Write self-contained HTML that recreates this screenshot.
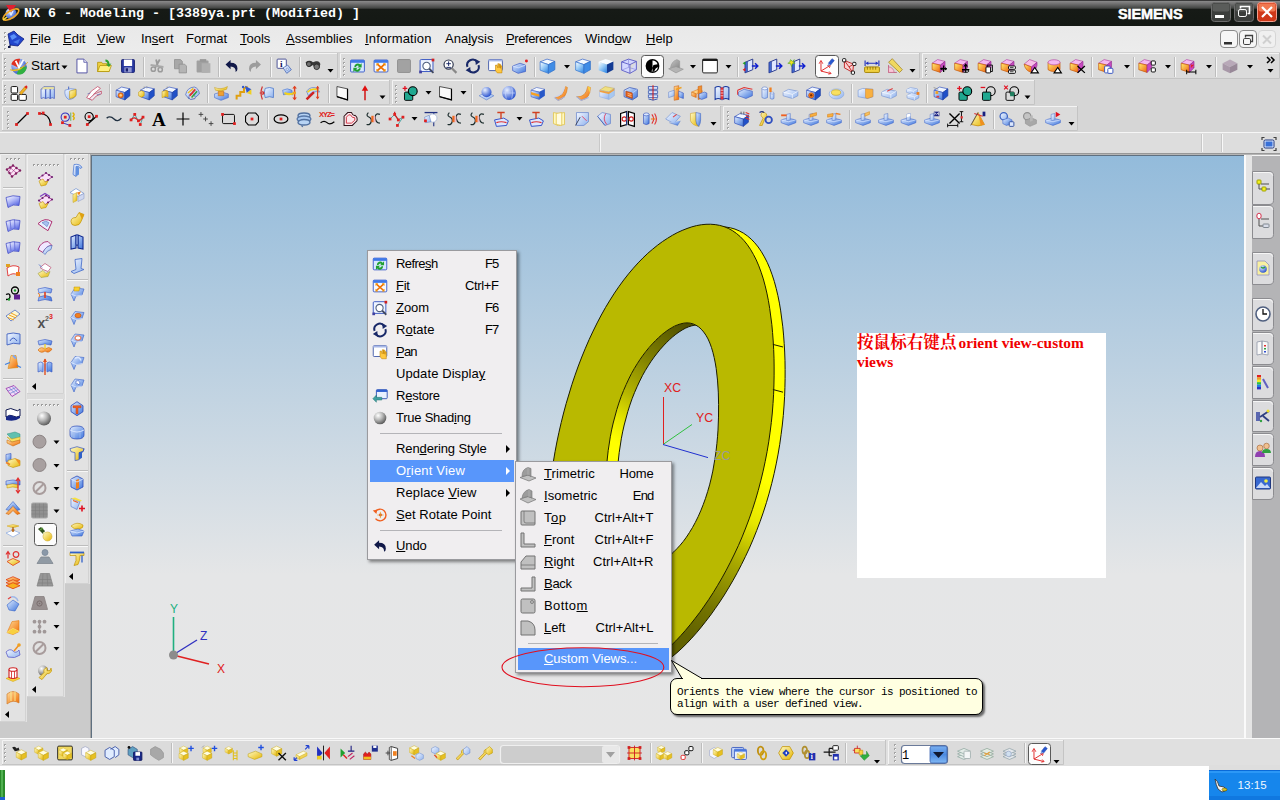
<!DOCTYPE html>
<html lang="en"><head><meta charset="utf-8"><title>NX 6 - Modeling</title>
<style>
html,body{margin:0;padding:0;}
body{width:1280px;height:800px;overflow:hidden;position:relative;background:#fff;font-family:"Liberation Sans","Noto Sans CJK SC",sans-serif;font-size:13px;color:#000;}
.abs{position:absolute;}
#title{left:0;top:0;width:1280px;height:26px;background:linear-gradient(#3a3a3a 0,#3a3a3a 1px,#8a8a8a 1px,#6e6e6e 4px,#444644 8px,#161a16 9.5px,#141814 100%);}
#title .t{left:24px;top:6px;font:bold 13.33px/16px "Liberation Mono",monospace;color:#fff;white-space:pre;}
#siemens{left:1118px;top:5px;font:bold 14.5px/18px "Liberation Sans",sans-serif;color:#fff;letter-spacing:-0.1px;-webkit-text-stroke:0.5px #fff;}
#menubar{left:0;top:26px;width:1280px;height:26px;background:linear-gradient(#e9e9e9,#ececec);border-bottom:1px solid #d0d0d0;}
#menubar span{position:absolute;top:5px;font-size:13px;line-height:16px;white-space:nowrap;}
u{text-decoration:underline;text-underline-offset:1px;}
#tbarea{left:0;top:53px;width:1280px;height:80px;background:#d6d6d6;}
#cue{left:0;top:132px;width:1280px;height:22px;background:#dddddd;border-top:1px solid #f6f6f6;border-bottom:1px solid #989898;box-sizing:border-box;}
#leftdock{left:0;top:154px;width:91px;height:584px;background:#cbcbcb;border-right:1px solid #a4a4a4;border-top:1px solid #b5b5b5;box-sizing:border-box;}
#gfx{left:91px;top:155px;width:1153px;height:583px;box-sizing:border-box;border-left:1px solid #5f7080;border-top:1px solid #5f7080;background:linear-gradient(#93bbdb 0,#e5e6e7 72%,#e6e6e6 100%);}
#rightbar{left:1244px;top:154px;width:36px;height:584px;background:#b4b4b6;border-top:1px solid #b5b5b5;box-sizing:border-box;}
#bottombar{left:0;top:738px;width:1280px;height:28px;background:#e0e0e0;border-top:1px solid #fafafa;box-sizing:border-box;}
#below{left:0;top:766px;width:1280px;height:34px;background:#fff;}
.menu{background:#f0eef0;border:1px solid #9a9a9e;box-shadow:2px 2px 3px rgba(0,0,0,.45);box-sizing:border-box;}
.mi{position:absolute;left:2px;right:2px;height:22px;line-height:22px;font-size:13px;white-space:nowrap;}
.mi .l{position:absolute;left:26px;top:0;letter-spacing:0.12px;}
.mi .r{position:absolute;right:15.5px;top:0;letter-spacing:0.12px;}
.mi.hl{background:#5896fb;color:#fff;}
.msep{position:absolute;height:1px;background:#b4b4b8;}
.arr{position:absolute;width:0;height:0;border-left:4px solid #000;border-top:4px solid transparent;border-bottom:4px solid transparent;}
#note{left:857px;top:333px;width:249px;height:245px;background:#fff;color:#f00000;font:bold 16px/19px "Liberation Serif","Noto Serif CJK SC",serif;}
#tip{left:670px;top:678px;width:313px;height:37px;box-sizing:border-box;background:#ffffe1;border:1px solid #000;border-radius:7px;box-shadow:2px 2px 2px rgba(0,0,0,.55);}
#tip div{position:absolute;left:6px;font:11px/12px "Liberation Mono",monospace;letter-spacing:-0.6px;white-space:pre;color:#000;}
#gtop{left:0;top:154px;width:1280px;height:1px;background:#b5b5b5;}

</style></head><body>
<div id="title" class="abs"><div class="abs t">NX 6 - Modeling - [3389ya.prt (Modified) ]</div><div id="siemens" class="abs">SIEMENS</div></div>
<div id="menubar" class="abs">
<span style="left:30px"><u>F</u>ile</span><span style="left:63px"><u>E</u>dit</span><span style="left:97px"><u>V</u>iew</span><span style="left:141px">In<u>s</u>ert</span><span style="left:186px">Fo<u>r</u>mat</span><span style="left:240px"><u>T</u>ools</span><span style="left:286px"><u>A</u>ssemblies</span><span style="left:365px;letter-spacing:0.14px"><u>I</u>nformation</span><span style="left:445px">Ana<u>l</u>ysis</span><span style="left:506px;letter-spacing:-0.42px"><u>P</u>references</span><span style="left:585px">Wind<u>o</u>w</span><span style="left:646px"><u>H</u>elp</span>
</div>
<div id="tbarea" class="abs"></div>
<div id="cue" class="abs"></div>
<div id="gtop" class="abs"></div>
<div id="leftdock" class="abs"></div>
<div id="gfx" class="abs"></div>
<div id="rightbar" class="abs"></div>
<div id="bottombar" class="abs"></div>
<div id="below" class="abs"></div>
<svg class="abs" style="left:0;top:0" width="1280" height="800" viewBox="0 0 1280 800"><defs>
<linearGradient id="gB" x1="0" y1="0" x2="1" y2="1"><stop offset="0" stop-color="#e4efff"/><stop offset="1" stop-color="#3d74dc"/></linearGradient>
<linearGradient id="gLB" x1="0" y1="0" x2="1" y2="1"><stop offset="0" stop-color="#f4f8ff"/><stop offset="1" stop-color="#8fb2ee"/></linearGradient>
<linearGradient id="gY" x1="0" y1="0" x2="1" y2="1"><stop offset="0" stop-color="#fffcc8"/><stop offset="1" stop-color="#e6b400"/></linearGradient>
<linearGradient id="gO" x1="0" y1="0" x2="1" y2="1"><stop offset="0" stop-color="#ffe0a0"/><stop offset="1" stop-color="#f06a00"/></linearGradient>
<linearGradient id="gOY" x1="0" y1="0" x2="1" y2="1"><stop offset="0" stop-color="#fff070"/><stop offset="1" stop-color="#f06010"/></linearGradient>
<linearGradient id="gG" x1="0" y1="0" x2="1" y2="1"><stop offset="0" stop-color="#c4c4c4"/><stop offset="1" stop-color="#8a8a8a"/></linearGradient>
<linearGradient id="gP" x1="0" y1="0" x2="1" y2="1"><stop offset="0" stop-color="#ffe6fa"/><stop offset="1" stop-color="#c060c8"/></linearGradient>
<linearGradient id="gBv" x1="0" y1="0" x2="0" y2="1"><stop offset="0" stop-color="#cfe0ff"/><stop offset="1" stop-color="#3868d0"/></linearGradient>
<linearGradient id="gBv2" x1="0" y1="0" x2="0" y2="1"><stop offset="0" stop-color="#7ab0f0"/><stop offset="0.5" stop-color="#4c8ae0"/><stop offset="1" stop-color="#80b8f4"/></linearGradient>
<linearGradient id="gBP" x1="0" y1="0" x2="0.6" y2="1"><stop offset="0" stop-color="#ffffff"/><stop offset="0.5" stop-color="#b0b8f8"/><stop offset="1" stop-color="#5060e0"/></linearGradient>
<linearGradient id="gBc" x1="0" y1="0" x2="0.7" y2="1"><stop offset="0" stop-color="#ffffff"/><stop offset="0.45" stop-color="#a8d4f8"/><stop offset="1" stop-color="#3c90e8"/></linearGradient>
<radialGradient id="gS" cx="0.35" cy="0.3" r="0.7"><stop offset="0" stop-color="#ffffff"/><stop offset="0.5" stop-color="#b8b8b8"/><stop offset="1" stop-color="#606060"/></radialGradient>
<radialGradient id="gBS" cx="0.35" cy="0.3" r="0.7"><stop offset="0" stop-color="#e8f0ff"/><stop offset="1" stop-color="#3058d0"/></radialGradient>
</defs><rect x="2" y="53" width="336" height="26" fill="#dbdbdb"/><path d="M2.5 79V53.5H338" stroke="#f4f4f4" fill="none"/><path d="M2 78.5H337.5V53" stroke="#c4c4c4" fill="none"/><rect x="340" y="53" width="580" height="26" fill="#dbdbdb"/><path d="M340.5 79V53.5H920" stroke="#f4f4f4" fill="none"/><path d="M340 78.5H919.5V53" stroke="#c4c4c4" fill="none"/><rect x="922" y="53" width="358" height="26" fill="#dbdbdb"/><path d="M922.5 79V53.5H1280" stroke="#f4f4f4" fill="none"/><path d="M922 78.5H1279.5V53" stroke="#c4c4c4" fill="none"/><rect x="4" y="58" width="2" height="2" fill="#a4a4a4"/><rect x="5" y="59" width="1" height="1" fill="#fff"/><rect x="4" y="62" width="2" height="2" fill="#a4a4a4"/><rect x="5" y="63" width="1" height="1" fill="#fff"/><rect x="4" y="66" width="2" height="2" fill="#a4a4a4"/><rect x="5" y="67" width="1" height="1" fill="#fff"/><rect x="4" y="70" width="2" height="2" fill="#a4a4a4"/><rect x="5" y="71" width="1" height="1" fill="#fff"/><rect x="4" y="74" width="2" height="2" fill="#a4a4a4"/><rect x="5" y="75" width="1" height="1" fill="#fff"/><rect x="343" y="58" width="2" height="2" fill="#a4a4a4"/><rect x="344" y="59" width="1" height="1" fill="#fff"/><rect x="343" y="62" width="2" height="2" fill="#a4a4a4"/><rect x="344" y="63" width="1" height="1" fill="#fff"/><rect x="343" y="66" width="2" height="2" fill="#a4a4a4"/><rect x="344" y="67" width="1" height="1" fill="#fff"/><rect x="343" y="70" width="2" height="2" fill="#a4a4a4"/><rect x="344" y="71" width="1" height="1" fill="#fff"/><rect x="343" y="74" width="2" height="2" fill="#a4a4a4"/><rect x="344" y="75" width="1" height="1" fill="#fff"/><rect x="925" y="58" width="2" height="2" fill="#a4a4a4"/><rect x="926" y="59" width="1" height="1" fill="#fff"/><rect x="925" y="62" width="2" height="2" fill="#a4a4a4"/><rect x="926" y="63" width="1" height="1" fill="#fff"/><rect x="925" y="66" width="2" height="2" fill="#a4a4a4"/><rect x="926" y="67" width="1" height="1" fill="#fff"/><rect x="925" y="70" width="2" height="2" fill="#a4a4a4"/><rect x="926" y="71" width="1" height="1" fill="#fff"/><rect x="925" y="74" width="2" height="2" fill="#a4a4a4"/><rect x="926" y="75" width="1" height="1" fill="#fff"/><g transform="translate(19 66.5) scale(0.92)"><g transform="scale(1.2)"><circle cx="0" cy="0" r="7" fill="url(#gBS)"/><path d="M-7 -2A7 7 0 0 1 1 -7L-1 1Z" fill="#e03020"/><path d="M-2 7A7 7 0 0 0 7 0L0 1Z" fill="#30b040"/><path d="M-8 3Q0 7 8 -4Q2 4 -8 3Z" fill="#ffd020" stroke="#e0a000" stroke-width="0.4"/><path d="M-3 -5L0 1L4 -6" fill="none" stroke="#fff" stroke-width="1.6"/></g></g><text x="31" y="70" font-family="Liberation Sans,sans-serif" font-size="13.5" fill="#000">Start</text><path d="M61.5 65.5h6l-3 3.5z" fill="#000"/><g transform="translate(82 66) scale(0.92)"><path d="M-5.5 -7.5H2L5.5 -4V7.5H-5.5Z" fill="#fff" stroke="#4a4aa0" stroke-width="1"/><path d="M2 -7.5V-4H5.5" fill="#e8e8f8" stroke="#4a4aa0" stroke-width="0.8"/></g><g transform="translate(104.5 66) scale(0.92)"><path d="M-7.5 -4H-3L-2 -2.5H5V6H-7.5Z" fill="#f0d040" stroke="#b09000" stroke-width="0.8"/><path d="M-7.5 6L-5 -0.5H7.5L5 6Z" fill="#fff080" stroke="#b09000" stroke-width="0.8"/><path d="M1 -7Q5 -7 5.5 -2L7.5 -3L5 1L1.5 -1.5L3.5 -2Q3 -5 1 -5Z" fill="#30a030"/></g><g transform="translate(128 66) scale(0.92)"><rect x="-7" y="-7" width="14" height="14" fill="#2838a0" stroke="#182070" stroke-width="1" rx="1"/><rect x="-4.5" y="-7" width="9" height="7" fill="#fff"/><rect x="-4" y="1.5" width="8" height="5.5" fill="#9098d0"/><rect x="-2.5" y="2.5" width="2.5" height="3.5" fill="#182070"/></g><path d="M143.5 57V77" stroke="#bdbdbd"/><path d="M144.5 57V77" stroke="#f6f6f6"/><g transform="translate(157 66) scale(0.92)"><path d="M-1 -7L1 1M3 -7L-2 2" fill="none" stroke="#9a9a9a" stroke-width="2"/><circle cx="-4" cy="3.5" r="2.3" fill="none" stroke="#9a9a9a" stroke-width="1.6"/><circle cx="3.5" cy="4" r="2.3" fill="none" stroke="#9a9a9a" stroke-width="1.6"/><path d="M-7 -1L7 1" fill="none" stroke="#a8a8a8" stroke-width="2.2"/></g><g transform="translate(180.5 66) scale(0.92)"><path d="M-6.5 -7H0L2 -5V3H-6.5Z" fill="#a8a8a8" stroke="#8c8c8c" stroke-width="0.8"/><path d="M-1.5 -2H4.5L6.5 0V7.5H-1.5Z" fill="#b4b4b4" stroke="#8c8c8c" stroke-width="0.8"/></g><g transform="translate(203.5 66) scale(0.92)"><rect x="-7.5" y="-6" width="13" height="13" fill="#a0a0a0" rx="1"/><rect x="-4" y="-7.5" width="7" height="3" fill="#989898"/><path d="M-2 -3H7.5V7.5H-2Z" fill="#b0b0b0"/></g><path d="M218.5 57V77" stroke="#bdbdbd"/><path d="M219.5 57V77" stroke="#f6f6f6"/><g transform="translate(231.5 66) scale(0.92)"><path d="M-6.5 -1.5L-1 -6.5V-3.5Q6.5 -3.5 6.5 3Q6.5 5.5 4.5 6.5Q5 1 -1 0.5V3.5Z" fill="#101848"/></g><g transform="translate(255 66) scale(0.92)"><path d="M6.5 -1.5L1 -6.5V-3.5Q-6.5 -3.5 -6.5 3Q-6.5 5.5 -4.5 6.5Q-5 1 1 0.5V3.5Z" fill="#9c9c9c"/></g><path d="M270.5 57V77" stroke="#bdbdbd"/><path d="M271.5 57V77" stroke="#f6f6f6"/><g transform="translate(284 66) scale(0.92)"><rect x="-7.5" y="-7.5" width="10" height="10" fill="#fff" stroke="#404890" stroke-width="1" rx="0.9"/><text x="-4.5" y="1" font-family="Liberation Serif,serif" font-weight="bold" font-size="10" fill="#101060">i</text><path d="M-1 2L4 -1L8 4L3 8Z" fill="url(#gLB)" stroke="#4060b0" stroke-width="0.8"/><circle cx="3.5" cy="3.5" r="1.2" fill="#fff" stroke="#4060b0" stroke-width="0.5"/></g><path d="M299.5 57V77" stroke="#bdbdbd"/><path d="M300.5 57V77" stroke="#f6f6f6"/><g transform="translate(313 65) scale(0.92)"><path d="M-8 -3Q-4 -6 0 -3L3 -4Q7 -5 8 -1L7 3Q5 6 2 4L0 0L-3 2Q-7 3 -8 -3Z" fill="#383838"/><circle cx="-4.5" cy="-1" r="2.6" fill="#707070" stroke="#202020" stroke-width="0.8"/><circle cx="4" cy="2" r="3" fill="#787878" stroke="#202020" stroke-width="0.8"/></g><path d="M327.5 69.0h6l-3 3.5z" fill="#000"/><g transform="translate(357.5 66) scale(0.92)"><rect x="-7.5" y="-6.5" width="15" height="13" fill="#d8e8ff" stroke="#3858c8" stroke-width="1" rx="1"/><rect x="-7.5" y="-6.5" width="15" height="3" fill="#3f78e8"/><path d="M-3.5 1A3.7 3.7 0 0 1 3 -1.5L4.5 -3V1.5H0L1.5 0A2 2 0 0 0 -1.7 1Z" fill="#20a030"/><path d="M3.5 2.5A3.7 3.7 0 0 1 -3 5L-4.5 6.5V2H0L-1.5 3.5A2 2 0 0 0 1.7 2.5Z" fill="#20a030"/></g><g transform="translate(381 66) scale(0.92)"><rect x="-7.5" y="-6.5" width="15" height="13" fill="#f4f8ff" stroke="#3858c8" stroke-width="1" rx="1"/><rect x="-7.5" y="-6.5" width="15" height="3" fill="#3f78e8"/><path d="M-4 -2L4 5M4 -2L-4 5" fill="none" stroke="#f07000" stroke-width="2"/><path d="M-5 -3h3l-3 3zM5 -3h-3l3 3zM-5 6h3l-3 -3zM5 6h-3l3 -3z" fill="#f09000"/></g><g transform="translate(404 66) scale(0.92)"><rect x="-7" y="-7" width="14" height="14" fill="#a2a2a2" stroke="#8e8e8e" stroke-width="1" rx="1"/></g><g transform="translate(427 66) scale(0.92)"><rect x="-7.5" y="-7" width="14" height="13" fill="#eef4ff" stroke="#3050c0" stroke-width="1" rx="1.2"/><circle cx="-0.5" cy="0" r="4" fill="#fff" stroke="#506080" stroke-width="1.2"/><path d="M2.5 3L7 7.5" fill="none" stroke="#404860" stroke-width="2"/><rect x="5" y="-8" width="3" height="3" fill="#d02020"/><rect x="-8.5" y="5" width="3" height="3" fill="#4040a0"/></g><g transform="translate(450 66) scale(0.92)"><circle cx="-1.5" cy="-1.5" r="5" fill="#fff" stroke="#303850" stroke-width="1.3"/><path d="M2 2.5L7 7.5" fill="none" stroke="#888" stroke-width="2.4"/><path d="M-4 -2.5h5M-1.5 -5v5M-4 1.5h5" fill="none" stroke="#102060" stroke-width="1"/></g><g transform="translate(473 66) scale(0.92)"><path d="M-6 1A6 6 0 0 1 4.5 -4.5" fill="none" stroke="#182868" stroke-width="2.2"/><path d="M6 -1A6 6 0 0 1 -4.5 4.5" fill="none" stroke="#182868" stroke-width="2.2"/><path d="M2.5 -7.5L8 -4.5L3 -1Z" fill="#182868"/><path d="M-2.5 7.5L-8 4.5L-3 1Z" fill="#182868"/></g><g transform="translate(495.5 66) scale(0.92)"><rect x="-7.5" y="-7" width="15" height="12" fill="#fff" stroke="#4058a8" stroke-width="1" rx="1"/><rect x="-7.5" y="-7" width="15" height="2" fill="#a8b8e8"/><path d="M0 -1V5L2 7.5H7V0L5.5 -0.5V2.5V-2L4 -2V2V-2.5L2.5 -2.5V2L1.5 -1Z" fill="#ffc840" stroke="#c08000" stroke-width="0.6"/></g><g transform="translate(520 66) scale(0.92)"><path d="M-8 0L0 -3L6 -1V6L-2 8L-8 5Z" fill="url(#gB)" stroke="#3050c0" stroke-width="0.7"/><path d="M-8 0L-2 2L6 -1" fill="none" stroke="#dce8ff" stroke-width="0.8"/><circle cx="7" cy="-5.5" r="1.6" fill="#e02020"/></g><path d="M534.5 57V77" stroke="#bdbdbd"/><path d="M535.5 57V77" stroke="#f6f6f6"/><g transform="translate(547.5 66) scale(0.92)"><path d="M-8 -4.5L-0.5 -7.5L8 -5L1 -1.5Z" fill="#f4faff" stroke="#3a68c8" stroke-width="0.8"/><path d="M-8 -4.5L1 -1.5V8L-8 4.5Z" fill="url(#gBc)" stroke="#3a78d0" stroke-width="0.8"/><path d="M1 -1.5L8 -5V4L1 8Z" fill="#3f8ce6" stroke="#3070c8" stroke-width="0.8"/></g><path d="M564 65.0h6l-3 3.5z" fill="#000"/><g transform="translate(583 66) scale(0.92)"><path d="M-8 -4.5L-0.5 -7.5L8 -5L1 -1.5Z" fill="#f4faff" stroke="#3a68c8" stroke-width="0.8"/><path d="M-8 -4.5L1 -1.5V8L-8 4.5Z" fill="url(#gBc)" stroke="#3a78d0" stroke-width="0.8"/><path d="M1 -1.5L8 -5V4L1 8Z" fill="#3f8ce6" stroke="#3070c8" stroke-width="0.8"/></g><g transform="translate(606 66) scale(0.92)"><path d="M-8 -4.5L-0.5 -7.5L8 -5L1 -1.5Z" fill="#f8fcff"/><path d="M-8 -4.5L1 -1.5V8L-8 4.5Z" fill="url(#gBc)"/><path d="M1 -1.5L8 -5V4L1 8Z" fill="#143c94"/></g><g transform="translate(629 66) scale(0.92)"><path d="M-8 -4.5L-0.5 -7.5L8 -5L1 -1.5ZM-8 -4.5V4.5L1 8V-1.5M8 -5V4L1 8" fill="#d4d8ff" stroke="#5050c0" stroke-width="0.9"/><path d="M-8 4.5L-0.5 1.5L8 4M-0.5 -7.5V1.5" fill="none" stroke="#8888dc" stroke-width="0.7"/></g><rect x="641.5" y="55.5" width="22" height="22" rx="3" fill="#fdfdfd" stroke="#5a5a5a"/><g transform="translate(652.5 66) scale(0.92)"><circle cx="0" cy="0" r="7.5" fill="#000"/><path d="M0 -6A6 6 0 0 1 5.5 -2L1 -1Q0 2 -1 6A6 6 0 0 0 2 5.5Q3 2 6 1A6 6 0 0 1 0 6Z" fill="#fff"/></g><g transform="translate(676 66) scale(0.92)"><path d="M-8 3L0 0.5L8 3.5L0 7.5Z" fill="#b4b4b4" stroke="#8c8c8c" stroke-width="0.6"/><path d="M-6 2Q-5 -5 1 -7L4 -5.5V2L0 0.5Z" fill="url(#gG)" stroke="#8c8c8c" stroke-width="0.5"/></g><path d="M690 65.0h6l-3 3.5z" fill="#000"/><g transform="translate(710 66) scale(0.92)"><rect x="-8" y="-7.5" width="16" height="15" fill="#fff" stroke="#101010" stroke-width="1" rx="1.2"/><rect x="-8" y="-7.5" width="16" height="2" fill="#101010"/></g><path d="M725.5 65.0h6l-3 3.5z" fill="#000"/><path d="M737.5 57V77" stroke="#bdbdbd"/><path d="M738.5 57V77" stroke="#f6f6f6"/><g transform="translate(750 66) scale(0.92)"><path d="M-3 -5L3 -7.5V4L-3 6.5Z" fill="#dfe8ff" stroke="#203088" stroke-width="1"/><path d="M-3 -5L-5.5 -4V7.5L-3 6.5" fill="#4068d0" stroke="#203088" stroke-width="0.8"/><path d="M2 0H8M5.5 -3L8.5 0L5.5 3" fill="none" stroke="#1020d0" stroke-width="1.6"/><path d="M-8 -3l3 -2v4z" fill="#20a020"/><path d="M-8 4l3 -2v4z" fill="#e02020"/></g><g transform="translate(774 66) scale(0.92)"><path d="M-3 -5L3 -7.5V4L-3 6.5Z" fill="#dfe8ff" stroke="#203088" stroke-width="1"/><path d="M-3 -5L-5.5 -4V7.5L-3 6.5" fill="#4068d0" stroke="#203088" stroke-width="0.8"/><path d="M2 0H8M5.5 -3L8.5 0L5.5 3" fill="none" stroke="#1020d0" stroke-width="1.6"/></g><g transform="translate(797 66) scale(0.92)"><path d="M-3 -5L3 -7.5V4L-3 6.5Z" fill="#dfe8ff" stroke="#203088" stroke-width="1"/><path d="M-3 -5L-5.5 -4V7.5L-3 6.5" fill="#4068d0" stroke="#203088" stroke-width="0.8"/><path d="M2 0H8M5.5 -3L8.5 0L5.5 3" fill="none" stroke="#1020d0" stroke-width="1.6"/><path d="M-7 -7l2 2l2 -2l-1 3l2 1l-3 .5l-1 3l-1 -3l-3 -.5l2 -1z" fill="#f0e020" stroke="#40a020" stroke-width="0.6"/></g><rect x="815.5" y="55.5" width="23" height="22" rx="3" fill="#fdfdfd" stroke="#5a5a5a"/><g transform="translate(826.5 66) scale(0.92)"><path d="M-6 -4V5.5L4 8M-6 5.5L3 0" fill="none" stroke="#e02020" stroke-width="1"/><path d="M-8 -2.5L-6 -6L-4 -2.5M2 8.8L5 8.2L3 6M1 -0.5L4 -0.5L3.2 2" fill="none" stroke="#e02020" stroke-width="1"/><path d="M2 -3L6 -8L8.5 -6L4.5 -1Z" fill="#2858d0" stroke="#1838a0" stroke-width="0.5"/><path d="M2 -3L1 0L4.5 -1Z" fill="#80a0e0"/></g><g transform="translate(849 66) scale(0.92)"><path d="M-5 -6L5 -2L4 7L-5 2Z M-5 -6L0 1L4 7 M0 1L5 -2" fill="#f8d0d0" stroke="#c02020" stroke-width="1"/><rect x="-7" y="-8" width="3.5" height="3.5" fill="#fff" stroke="#000" stroke-width="1" rx="1"/><rect x="4" y="-4" width="3.5" height="3.5" fill="#fff" stroke="#000" stroke-width="1" rx="1"/><rect x="2.5" y="5.5" width="3.5" height="3.5" fill="#fff" stroke="#000" stroke-width="1" rx="1"/></g><g transform="translate(872 66) scale(0.92)"><rect x="-8" y="1" width="16" height="6" fill="#f0d040" stroke="#a08000" stroke-width="1" rx="0.8"/><path d="M-5 1v3M-2 1v3M1 1v3M4 1v3" fill="none" stroke="#806000" stroke-width="0.8"/><path d="M-7.5 -6V0M7.5 -6V0M-6 -3H6" fill="none" stroke="#2030c0" stroke-width="1.2"/><path d="M-7 -3l3 -2v4zM7 -3l-3 -2v4z" fill="#2030c0"/></g><g transform="translate(895 66) scale(0.92)"><path d="M-7 -4L-3 -8L8 4L5 7Z" fill="#f0d860" stroke="#a08020" stroke-width="0.8"/><path d="M-7 -1V7H2" fill="none" stroke="#c06080" stroke-width="1"/><path d="M-7 7V1A6 6 0 0 1 -1 7Z" fill="#f8c8d8" stroke="#c06080" stroke-width="0.7"/></g><path d="M909.5 69.0h6l-3 3.5z" fill="#000"/><g transform="translate(939.5 66) scale(0.92)"><path d="M-8 -3L-2 -7L6 -5L1 -1Z" fill="#f4b8f0" stroke="#b040a0" stroke-width="0.7"/><path d="M-8 -3V4L1 7V-1Z" fill="url(#gOY)" stroke="#c05000" stroke-width="0.7"/><path d="M1 -1L6 -5V2L1 7Z" fill="#c848c0" stroke="#903090" stroke-width="0.7"/><path d="M1 3H8M4.5 -0.5V6.5" fill="none" stroke="#000" stroke-width="1.4"/><path d="M1 3l2 -2v4zM8 3l-2 -2v4z" fill="#000"/></g><g transform="translate(962 66) scale(0.92)"><path d="M-8 -3L-2 -7L6 -5L1 -1Z" fill="#f4b8f0" stroke="#b040a0" stroke-width="0.7"/><path d="M-8 -3V4L1 7V-1Z" fill="url(#gOY)" stroke="#c05000" stroke-width="0.7"/><path d="M1 -1L6 -5V2L1 7Z" fill="#c848c0" stroke="#903090" stroke-width="0.7"/><path d="M4 -2V7M0 4H8" fill="none" stroke="#000" stroke-width="1.3"/><path d="M4 -3l-2.5 3.5h5z" fill="#000"/><ellipse cx="4" cy="5.5" rx="3.5" ry="1.5" fill="none" stroke="#000" stroke-width="0.9"/></g><g transform="translate(985.5 66) scale(0.92)"><path d="M-8 -3L-2 -7L6 -5L1 -1Z" fill="#f4b8f0" stroke="#b040a0" stroke-width="0.7"/><path d="M-8 -3V4L1 7V-1Z" fill="url(#gOY)" stroke="#c05000" stroke-width="0.7"/><path d="M1 -1L6 -5V2L1 7Z" fill="#c848c0" stroke="#903090" stroke-width="0.7"/><rect x="0.5" y="1" width="5" height="6.5" fill="#fff" stroke="#000" stroke-width="1" rx="1"/><path d="M2 1V-1H7.5V6H5.5" fill="none" stroke="#000" stroke-width="1"/></g><g transform="translate(1008.5 66) scale(0.92)"><path d="M-8 -3L-2 -7L6 -5L1 -1Z" fill="#f4b8f0" stroke="#b040a0" stroke-width="0.7"/><path d="M-8 -3V4L1 7V-1Z" fill="url(#gOY)" stroke="#c05000" stroke-width="0.7"/><path d="M1 -1L6 -5V2L1 7Z" fill="#c848c0" stroke="#903090" stroke-width="0.7"/><rect x="0" y="0" width="7.5" height="3.5" fill="#fff" stroke="#000" stroke-width="1" rx="0.9"/><rect x="0" y="4.5" width="7.5" height="3.5" fill="#fff" stroke="#000" stroke-width="1" rx="0.9"/><path d="M1.5 1.7h4M1.5 6.2h4" fill="none" stroke="#000" stroke-width="0.8"/></g><g transform="translate(1031.5 66) scale(0.92)"><path d="M-8 -2L-2 -7L6 -4L0 1Z" fill="#f8c0e8" stroke="#b040a0" stroke-width="0.7"/><path d="M-8 -2Q-7 5 0 7V1Z" fill="url(#gOY)" stroke="#c05000" stroke-width="0.7"/><path d="M0 1L6 -4Q7 3 0 7Z" fill="#c848c0" stroke="#903090" stroke-width="0.7"/><path d="M3.5 1.5L7.5 7.5H-0.5Z" fill="#fff" stroke="#000" stroke-width="1.2"/></g><g transform="translate(1054.5 66) scale(0.92)"><path d="M-7 -4V4Q-1 8 6 4V-4Z" fill="url(#gOY)" stroke="#c05000" stroke-width="0.7"/><ellipse cx="-0.5" cy="-4" rx="6.5" ry="2.8" fill="#f4b8f0" stroke="#b040a0" stroke-width="0.7"/><path d="M3.5 1.5L7.5 7.5H-0.5Z" fill="#fff" stroke="#000" stroke-width="1.2"/></g><g transform="translate(1077.5 66) scale(0.92)"><path d="M-8 -3L-2 -7L6 -5L1 -1Z" fill="#f4b8f0" stroke="#b040a0" stroke-width="0.7"/><path d="M-8 -3V4L1 7V-1Z" fill="url(#gOY)" stroke="#c05000" stroke-width="0.7"/><path d="M1 -1L6 -5V2L1 7Z" fill="#c848c0" stroke="#903090" stroke-width="0.7"/><path d="M0 0L8 7.5M8 0L0 7.5" fill="none" stroke="#000" stroke-width="1.4"/></g><path d="M1091.5 57V77" stroke="#bdbdbd"/><path d="M1092.5 57V77" stroke="#f6f6f6"/><g transform="translate(1106 66) scale(0.92)"><path d="M-8 -3L-2 -7L6 -5L1 -1Z" fill="#f4b8f0" stroke="#b040a0" stroke-width="0.7"/><path d="M-8 -3V4L1 7V-1Z" fill="url(#gOY)" stroke="#c05000" stroke-width="0.7"/><path d="M1 -1L6 -5V2L1 7Z" fill="#c848c0" stroke="#903090" stroke-width="0.7"/><rect x="-1.5" y="0" width="6" height="7.5" fill="#fff" stroke="#3050c0" stroke-width="1" rx="1"/><rect x="2" y="2.5" width="5.5" height="5.5" fill="#fff" stroke="#3050c0" stroke-width="1" rx="1"/></g><path d="M1124 65.0h6l-3 3.5z" fill="#000"/><path d="M1133.5 57V77" stroke="#bdbdbd"/><path d="M1134.5 57V77" stroke="#f6f6f6"/><g transform="translate(1148 66) scale(0.92)"><g transform="translate(-2 0)"><path d="M-8 -3L-2 -7L6 -5L1 -1Z" fill="#f4b8f0" stroke="#b040a0" stroke-width="0.7"/><path d="M-8 -3V4L1 7V-1Z" fill="url(#gOY)" stroke="#c05000" stroke-width="0.7"/><path d="M1 -1L6 -5V2L1 7Z" fill="#c848c0" stroke="#903090" stroke-width="0.7"/></g><rect x="3.5" y="-5.5" width="4.5" height="4.5" fill="#fff" stroke="#000" stroke-width="1" rx="1"/><rect x="3.5" y="2" width="4.5" height="4.5" fill="#fff" stroke="#000" stroke-width="1" rx="1"/></g><path d="M1165 65.0h6l-3 3.5z" fill="#000"/><path d="M1174.5 57V77" stroke="#bdbdbd"/><path d="M1175.5 57V77" stroke="#f6f6f6"/><g transform="translate(1188.5 66) scale(0.92)"><path d="M-8 -3L-2 -7L6 -5L1 -1Z" fill="#f4b8f0" stroke="#b040a0" stroke-width="0.7"/><path d="M-8 -3V4L1 7V-1Z" fill="url(#gOY)" stroke="#c05000" stroke-width="0.7"/><path d="M1 -1L6 -5V2L1 7Z" fill="#c848c0" stroke="#903090" stroke-width="0.7"/><path d="M-2 6.5H8M-2 4v5M8 4v5" fill="none" stroke="#000" stroke-width="1.1"/><path d="M2.5 -1.5l3 3m0 -3l-3 3" fill="none" stroke="#e02020" stroke-width="1.1"/></g><path d="M1206 65.0h6l-3 3.5z" fill="#000"/><path d="M1215.5 57V77" stroke="#bdbdbd"/><path d="M1216.5 57V77" stroke="#f6f6f6"/><g transform="translate(1230 66) scale(0.92)"><path d="M-8 -3L0 -7L8 -3L0 1Z" fill="#b8a8b8"/><path d="M-8 -3V4L0 8V1Z" fill="#a898a8"/><path d="M0 1L8 -3V4L0 8Z" fill="#988898"/></g><path d="M1247 65.0h6l-3 3.5z" fill="#000"/><path d="M1267 57l3 3l-3 3M1271 57l3 3l-3 3" fill="none" stroke="#000" stroke-width="1.5"/><path d="M1267.5 69.0h6l-3 3.5z" fill="#000"/><rect x="2" y="80" width="388" height="25" fill="#dbdbdb"/><path d="M2.5 105V80.5H390" stroke="#f4f4f4" fill="none"/><path d="M2 104.5H389.5V80" stroke="#c4c4c4" fill="none"/><rect x="392" y="80" width="643" height="25" fill="#dbdbdb"/><path d="M392.5 105V80.5H1035" stroke="#f4f4f4" fill="none"/><path d="M392 104.5H1034.5V80" stroke="#c4c4c4" fill="none"/><rect x="4" y="85" width="2" height="2" fill="#a4a4a4"/><rect x="5" y="86" width="1" height="1" fill="#fff"/><rect x="4" y="89" width="2" height="2" fill="#a4a4a4"/><rect x="5" y="90" width="1" height="1" fill="#fff"/><rect x="4" y="93" width="2" height="2" fill="#a4a4a4"/><rect x="5" y="94" width="1" height="1" fill="#fff"/><rect x="4" y="97" width="2" height="2" fill="#a4a4a4"/><rect x="5" y="98" width="1" height="1" fill="#fff"/><rect x="4" y="101" width="2" height="2" fill="#a4a4a4"/><rect x="5" y="102" width="1" height="1" fill="#fff"/><rect x="395" y="85" width="2" height="2" fill="#a4a4a4"/><rect x="396" y="86" width="1" height="1" fill="#fff"/><rect x="395" y="89" width="2" height="2" fill="#a4a4a4"/><rect x="396" y="90" width="1" height="1" fill="#fff"/><rect x="395" y="93" width="2" height="2" fill="#a4a4a4"/><rect x="396" y="94" width="1" height="1" fill="#fff"/><rect x="395" y="97" width="2" height="2" fill="#a4a4a4"/><rect x="396" y="98" width="1" height="1" fill="#fff"/><rect x="395" y="101" width="2" height="2" fill="#a4a4a4"/><rect x="396" y="102" width="1" height="1" fill="#fff"/><g transform="translate(18.5 93) scale(0.92)"><rect x="-8" y="-7" width="7" height="7" fill="#fff" stroke="#000" stroke-width="1" rx="1.2"/><rect x="-8" y="1.5" width="7" height="6.5" fill="#fff" stroke="#000" stroke-width="1" rx="1.2"/><rect x="0.5" y="1.5" width="8" height="6.5" fill="#fff" stroke="#000" stroke-width="1" rx="1.2"/><path d="M1 0L7 -7L9 -5L3 2Z" fill="#f0b020" stroke="#a06000" stroke-width="0.5"/><path d="M6.5 -6.5L8.5 -8.5L10 -6.5L8.5 -4.5Z" fill="#e02020"/></g><path d="M33.5 84V103" stroke="#bdbdbd"/><path d="M34.5 84V103" stroke="#f6f6f6"/><g transform="translate(47.5 93) scale(0.92)"><path d="M-7 -4Q-4 -6 -2 -4V6Q-4 4 -7 6ZM-2 -4Q1 -6 3 -4V6Q1 4 -2 6ZM3 -4Q5 -6 7.5 -4V6Q5 4 3 6Z" fill="url(#gLB)" stroke="#4058c0" stroke-width="0.8"/><path d="M-7 -4L-4 -7H7.5V-4" fill="#e8e0a0" stroke="#4058c0" stroke-width="0.6"/></g><g transform="translate(70.5 93) scale(0.92)"><path d="M-6 -3Q-7 4 -2 7Q4 7 6 2V-4Q0 -6 -6 -3Z" fill="url(#gLB)" stroke="#6080d0" stroke-width="0.7"/><path d="M-1 -2L6 -4V3Q3 6 -1 6Z" fill="url(#gY)" stroke="#c09000" stroke-width="0.6"/><path d="M-2 -7v3" fill="none" stroke="#4060c0" stroke-width="1"/></g><g transform="translate(94 93) scale(0.92)"><path d="M-8 5Q-4 -3 4 -7L7 -5Q0 -1 -4 7Z" fill="#fff" stroke="#c04060" stroke-width="0.8"/><path d="M-5 6Q0 0 8 -2L8 1Q2 2 -2 8Z" fill="#f0e8f0" stroke="#c04060" stroke-width="0.8"/><path d="M-7 1l3 -1M3 2l4 -1" fill="none" stroke="#6070b0" stroke-width="0.8"/></g><path d="M109.5 84V103" stroke="#bdbdbd"/><path d="M110.5 84V103" stroke="#f6f6f6"/><g transform="translate(123 93) scale(0.92)"><path d="M-7.5 -3L-1.5 -6.5L7.5 -4.5L2 -0.5Z" fill="#f0f6ff" stroke="#2848b8" stroke-width="0.7"/><path d="M-7.5 -3V4L2 7.5V-0.5Z" fill="url(#gB)" stroke="#2848b8" stroke-width="0.7"/><path d="M2 -0.5L7.5 -4.5V3L2 7.5Z" fill="#2050c8" stroke="#2040a0" stroke-width="0.7"/><ellipse cx="-2.5" cy="2.5" rx="2.8" ry="2.8" fill="#f08020" stroke="#c04000" stroke-width="0.6"/><ellipse cx="-2.5" cy="2.5" rx="1.3" ry="1.3" fill="#ffd080"/></g><g transform="translate(146 93) scale(0.92)"><g transform="translate(1.5 0)"><path d="M-7.5 -3L-1.5 -6.5L7.5 -4.5L2 -0.5Z" fill="#f0f6ff" stroke="#2848b8" stroke-width="0.7"/><path d="M-7.5 -3V4L2 7.5V-0.5Z" fill="url(#gB)" stroke="#2848b8" stroke-width="0.7"/><path d="M2 -0.5L7.5 -4.5V3L2 7.5Z" fill="#2050c8" stroke="#2040a0" stroke-width="0.7"/></g><path d="M-8 -1Q-5 -4 -2 -1V3Q-5 6 -8 3Z" fill="url(#gY)" stroke="#c09000" stroke-width="0.6"/><path d="M-2 -7v2M1 -7v2" fill="none" stroke="#888" stroke-width="0.8"/></g><g transform="translate(169 93) scale(0.92)"><g transform="translate(1.5 0)"><path d="M-7.5 -3L-1.5 -6.5L7.5 -4.5L2 -0.5Z" fill="#f0f6ff" stroke="#2848b8" stroke-width="0.7"/><path d="M-7.5 -3V4L2 7.5V-0.5Z" fill="url(#gB)" stroke="#2848b8" stroke-width="0.7"/><path d="M2 -0.5L7.5 -4.5V3L2 7.5Z" fill="#2050c8" stroke="#2040a0" stroke-width="0.7"/></g><path d="M-7.5 -1.5L-3 -3V3.5L-7.5 5Z" fill="url(#gY)" stroke="#c09000" stroke-width="0.6"/><path d="M-3 -3L-1 -2V4.5L-3 3.5" fill="#f0b820" stroke="#c09000" stroke-width="0.5"/><path d="M-2 -7v2" fill="none" stroke="#888" stroke-width="0.8"/></g><g transform="translate(192.5 93) scale(0.92)"><path d="M-7.5 2Q-6 -6 2 -6.5Q7 -5 7.5 1L3 5Q2 0 -2 0.5Q-4 2 -4 6Z" fill="url(#gLB)" stroke="#5068b8" stroke-width="0.8"/><path d="M-3 3L3 -4" fill="none" stroke="#e03030" stroke-width="2"/><path d="M-5 0L1 -5" fill="none" stroke="#f0c020" stroke-width="1.6"/><path d="M-1 5L5 -2" fill="none" stroke="#30a040" stroke-width="1.6"/><path d="M3 6L-2 7L-5 5" fill="none" stroke="#5068b8" stroke-width="1"/></g><path d="M207.5 84V103" stroke="#bdbdbd"/><path d="M208.5 84V103" stroke="#f6f6f6"/><g transform="translate(221 93) scale(0.92)"><path d="M-7 1L1 -1L8 1V5L0 8L-7 5Z" fill="url(#gB)" stroke="#3860c8" stroke-width="0.6"/><path d="M-3 -2H3V3H-3Z" fill="#f0a030" stroke="#c06000" stroke-width="0.5"/><path d="M-7 -6Q0 -3 7 -7L6 -4Q0 -1 -6 -3Z" fill="url(#gY)" stroke="#c09000" stroke-width="0.5"/></g><g transform="translate(244 93) scale(0.92)"><path d="M-8 7V3H-4V-1H0V-5L4 -7" fill="none" stroke="#e0a010" stroke-width="2.2"/><path d="M1 -8L8 -4L3 0Z" fill="#3058d0"/><path d="M3 0L8 -4V2Z" fill="#f0d020"/><circle cx="-1" cy="-6.5" r="1.3" fill="#3058d0"/></g><g transform="translate(267 93) scale(0.92)"><path d="M-2 -5Q3 -7 7 -5V5Q3 3 -2 5Q-4 0 -2 -5Z" fill="url(#gLB)" stroke="#4070c8" stroke-width="0.8"/><path d="M-5 -7Q-8 0 -5 7" fill="none" stroke="#d03030" stroke-width="1.3"/><path d="M-8 0h5M-5 -2l2 2l-2 2" fill="none" stroke="#d03030" stroke-width="1.1"/></g><g transform="translate(290 93) scale(0.92)"><path d="M-8 -3Q-3 -6 2 -3L3 2Q-3 0 -7 2Z" fill="url(#gB)" stroke="#3060c8" stroke-width="0.6"/><path d="M-6 0Q0 3 6 -1" fill="none" stroke="#f0d020" stroke-width="2.4"/><path d="M5 -7V7" fill="none" stroke="#e04020" stroke-width="1.5"/><path d="M5 -8l-2.5 3h5zM5 8l-2.5 -3h5z" fill="#e04020"/><circle cx="5" cy="0" r="1.6" fill="#f0a020"/></g><g transform="translate(313 93) scale(0.92)"><path d="M-7 -2Q-2 -8 5 -5L7 -1Q0 -3 -5 3Z" fill="url(#gLB)" stroke="#5070c0" stroke-width="0.7"/><path d="M-6 -1Q-1 -6 6 -3" fill="none" stroke="#f0d020" stroke-width="1.8"/><path d="M-7 7L1 -1" fill="none" stroke="#d02020" stroke-width="2.6"/><path d="M5 -7V5" fill="none" stroke="#e04020" stroke-width="1.3"/><path d="M5 -8l-2 3h4zM5 7l-2 -3h4z" fill="#e04020"/></g><path d="M328.5 84V103" stroke="#bdbdbd"/><path d="M329.5 84V103" stroke="#f6f6f6"/><g transform="translate(342 93) scale(0.92)"><path d="M-5.5 -7L6 -4.5V7.5L-5.5 4Z" fill="#fafafa" stroke="#303030" stroke-width="0.9"/><path d="M6 -4.5V7.5L-5.5 4" fill="none" stroke="#000" stroke-width="1.3"/></g><g transform="translate(365 93) scale(0.92)"><path d="M0 -4V8" fill="none" stroke="#d01010" stroke-width="1.6"/><path d="M0 -8.5L-3.5 -2.5H3.5Z" fill="#e01010"/></g><path d="M379.5 95.5h6l-3 3.5z" fill="#000"/><g transform="translate(410 93) scale(0.92)"><rect x="-6" y="-1" width="9" height="9" fill="#20a890" stroke="#000" stroke-width="1" rx="1.2"/><circle cx="3" cy="-2" r="4.8" fill="#20a890" stroke="#000" stroke-width="1.2"/><path d="M-8 -5h5M-5.5 -7.5v5" fill="none" stroke="#e01020" stroke-width="1.4"/></g><path d="M425.5 91.0h6l-3 3.5z" fill="#000"/><g transform="translate(445.5 93) scale(0.92)"><path d="M-6.5 -7L6.5 -4.5V7.5L-6.5 4Z" fill="#fafafa" stroke="#303030" stroke-width="0.9"/><path d="M6.5 -4.5V7.5L-6.5 4" fill="none" stroke="#000" stroke-width="1.3"/></g><path d="M460.5 91.0h6l-3 3.5z" fill="#000"/><path d="M471.5 84V103" stroke="#bdbdbd"/><path d="M472.5 84V103" stroke="#f6f6f6"/><g transform="translate(486.5 93) scale(0.92)"><path d="M-8 3L0 -1L8 3L0 7.5Z" fill="url(#gLB)" stroke="#6080c8" stroke-width="0.7"/><circle cx="0" cy="-1" r="5.5" fill="url(#gBS)"/></g><g transform="translate(509 93) scale(0.92)"><circle cx="0" cy="0" r="7.5" fill="url(#gBS)"/><path d="M-3 -6Q-5 0 -3 6M3 -6Q5 0 3 6M-7 0H7" fill="none" stroke="#c8d8ff" stroke-width="0.7"/></g><path d="M524.5 84V103" stroke="#bdbdbd"/><path d="M525.5 84V103" stroke="#f6f6f6"/><g transform="translate(537.5 93) scale(0.92)"><path d="M-7 -3L-1 -6L8 -4L2 -1Z" fill="#f4f8ff" stroke="#3858c0" stroke-width="0.6"/><path d="M-7 -3V4L2 7V-1Z" fill="url(#gB)" stroke="#3858c0" stroke-width="0.6"/><path d="M2 -1L8 -4V3L2 7Z" fill="#2858c8"/><path d="M-7 -1L2 1.5V4L-7 1.5Z" fill="#f8a020"/></g><g transform="translate(561 93) scale(0.92)"><path d="M-7 5Q2 5 5 -7L7 -6Q6 6 -3 8Z" fill="url(#gO)" stroke="#d07000" stroke-width="0.5"/><path d="M-7 5L-3 8L4 4" fill="none" stroke="#a0b0e0" stroke-width="1.2"/><path d="M-8 5L1 1L4 -6" fill="none" stroke="#c8d0f0" stroke-width="1"/></g><g transform="translate(584 93) scale(0.92)"><path d="M-8 4Q2 5 4 -7L7 -6Q7 6 -3 8Z" fill="url(#gO)" stroke="#d07000" stroke-width="0.5"/><path d="M4 -7L7 -6L6 0" fill="#f8d040"/><path d="M-8 4L-3 8L5 5" fill="none" stroke="#a0b0e0" stroke-width="1.2"/></g><g transform="translate(607 93) scale(0.92)"><path d="M-8 -3L-2 -7L8 -5L2 -1Z" fill="#f0e080" stroke="#c0a040" stroke-width="0.5"/><path d="M-8 -3L2 -1V7L-8 4Z" fill="url(#gLB)" stroke="#88a8e0" stroke-width="0.5"/><path d="M2 -1L8 -5V3L2 7Z" fill="#a8c8f0" stroke="#88a8e0" stroke-width="0.5"/><path d="M-8 -3L2 -1L8 -5L8 -3L2 1L-8 -1Z" fill="#f0a040"/></g><g transform="translate(630.5 93) scale(0.92)"><path d="M-7 -3L-1 -6L7.5 -4V4L2 7.5L-7 4Z" fill="url(#gB)" stroke="#2848b0" stroke-width="0.7"/><path d="M-5 -2L2 0V6L-5 3.5Z" fill="#e86820" stroke="#a03000" stroke-width="0.6"/><path d="M-3 0.5L1 1.7M-3 2.5L1 3.7" fill="none" stroke="#ffd0a0" stroke-width="0.8"/><path d="M2 0L7.5 -4" fill="none" stroke="#c8d8ff" stroke-width="0.8"/></g><g transform="translate(653 93) scale(0.92)"><path d="M-5 -7H5V-4H-5ZM-5 -2.5H5V0.5H-5ZM-5 2H5V5H-5Z" fill="#dce8ff" stroke="#3858b0" stroke-width="0.9"/><path d="M0 -8.5V8" fill="none" stroke="#d02020" stroke-width="1.2"/><path d="M-5 6.5Q0 9 5 6.5" fill="none" stroke="#3858b0" stroke-width="1"/></g><g transform="translate(676 93) scale(0.92)"><path d="M-2 -7L3 -8V7L-2 8Z" fill="url(#gO)" stroke="#c05000" stroke-width="0.5"/><path d="M-8 -1L-2 -3V3L-8 5Z" fill="url(#gLB)" stroke="#6080c8" stroke-width="0.6"/><path d="M3 -2L8 0V6L3 4Z" fill="url(#gB)" stroke="#3050c0" stroke-width="0.6"/><path d="M0 -4L6 -6" fill="none" stroke="#f0a020" stroke-width="1.5"/></g><g transform="translate(699 93) scale(0.92)"><path d="M-8 -1L-1 -4L4 -2L-3 1Z" fill="#ffd080" stroke="#d06000" stroke-width="0.5"/><path d="M-8 -1V3L-3 5V1Z" fill="url(#gO)" stroke="#d06000" stroke-width="0.5"/><path d="M-1 -7L3 -8V6L-1 7Z" fill="#f09030" stroke="#c05000" stroke-width="0.5"/><path d="M0 1L6 -1L8.5 0V5L3 7L0 5.5Z" fill="url(#gB)" stroke="#3050c0" stroke-width="0.6"/></g><g transform="translate(722 93) scale(0.92)"><path d="M-7.5 -6Q-4 -8 -1 -6V7Q-4 5 -7.5 7ZM1 -6Q4 -8 7.5 -6V7Q4 5 1 7Z" fill="url(#gLB)" stroke="#1838a0" stroke-width="1.1"/><rect x="-1.5" y="-6" width="3" height="13" fill="#e03030"/><path d="M-1.5 -3h3M-1.5 0h3M-1.5 3h3" fill="none" stroke="#fff" stroke-width="0.7"/></g><g transform="translate(745 93) scale(0.92)"><path d="M-7 -1L-1 -4L8 -2V3L1 6L-7 3Z" fill="url(#gB)" stroke="#3050c0" stroke-width="0.6"/><path d="M-8 -3L-1 -6L8 -4" fill="none" stroke="#e03030" stroke-width="1.1"/><path d="M-8 -3V2" fill="none" stroke="#e03030" stroke-width="1.1"/></g><g transform="translate(767.5 93) scale(0.92)"><path d="M-6 -5V5Q-3 7 0 5V-5Z" fill="url(#gLB)" stroke="#5878c8" stroke-width="0.7"/><ellipse cx="-3" cy="-5" rx="3" ry="1.6" fill="#f0f6ff" stroke="#5878c8" stroke-width="0.6"/><path d="M3 0V6Q5 7.5 7 6V0Z" fill="url(#gLB)" stroke="#5878c8" stroke-width="0.7"/><ellipse cx="5" cy="0" rx="2" ry="1.1" fill="#f0f6ff" stroke="#5878c8" stroke-width="0.5"/><rect x="2" y="-6" width="2.5" height="5" fill="#f08020"/></g><g transform="translate(790.5 93) scale(0.92)"><path d="M-8 -1L-2 -4L8 -2V3L2 6L-8 3Z" fill="url(#gLB)" stroke="#7090d0" stroke-width="0.7"/><path d="M-8 -1L2 1.5L8 -2M2 1.5V6" fill="none" stroke="#fff" stroke-width="0.7"/></g><g transform="translate(813.5 93) scale(0.92)"><path d="M-7.5 -3L-1.5 -6.5L7.5 -4.5L2 -0.5Z" fill="#f0f6ff" stroke="#2848b8" stroke-width="0.7"/><path d="M-7.5 -3V4L2 7.5V-0.5Z" fill="url(#gB)" stroke="#2848b8" stroke-width="0.7"/><path d="M2 -0.5L7.5 -4.5V3L2 7.5Z" fill="#2050c8" stroke="#2040a0" stroke-width="0.7"/><ellipse cx="-2.5" cy="2.5" rx="2.8" ry="2.8" fill="#f08020" stroke="#c04000" stroke-width="0.6"/><ellipse cx="-2.5" cy="2.5" rx="1.3" ry="1.3" fill="#803000"/></g><g transform="translate(836.5 93) scale(0.92)"><ellipse cx="0" cy="1" rx="8" ry="5.5" fill="url(#gLB)" stroke="#88a8e0" stroke-width="0.7"/><ellipse cx="-0.5" cy="-0.5" rx="5" ry="3" fill="#f8e060" stroke="#c0a020" stroke-width="0.7"/></g><path d="M851.5 84V103" stroke="#bdbdbd"/><path d="M852.5 84V103" stroke="#f6f6f6"/><g transform="translate(865.5 93) scale(0.92)"><path d="M-8 -3L-3 -5L8 -4V4L2 6L-8 4Z" fill="url(#gLB)" stroke="#7898d8" stroke-width="0.7"/><path d="M0 -4.5L8 -4V4L2 6L0 5Z" fill="#f8b040" stroke="#d08020" stroke-width="0.5"/></g><g transform="translate(889 93) scale(0.92)"><path d="M-8 -1L-2 -4L8 -2V3L2 6L-8 3Z" fill="url(#gLB)" stroke="#7090d0" stroke-width="0.7"/><path d="M-8 -1L2 1.5L8 -2M2 1.5V6" fill="none" stroke="#fff" stroke-width="0.7"/><path d="M-2 -2L4 -5" fill="none" stroke="#e04040" stroke-width="1.2"/></g><g transform="translate(912 93) scale(0.92)"><g transform="translate(0 -3)"><g transform="scale(.75)"><path d="M-8 -1L-2 -4L8 -2V3L2 6L-8 3Z" fill="url(#gLB)" stroke="#7090d0" stroke-width="0.7"/><path d="M-8 -1L2 1.5L8 -2M2 1.5V6" fill="none" stroke="#fff" stroke-width="0.7"/></g></g><g transform="translate(1 3)"><g transform="scale(.8)"><path d="M-8 -1L-2 -4L8 -2V3L2 6L-8 3Z" fill="url(#gLB)" stroke="#7090d0" stroke-width="0.7"/><path d="M-8 -1L2 1.5L8 -2M2 1.5V6" fill="none" stroke="#fff" stroke-width="0.7"/></g></g><rect x="5" y="-1" width="3" height="3" fill="#f08020"/></g><path d="M926.5 84V103" stroke="#bdbdbd"/><path d="M927.5 84V103" stroke="#f6f6f6"/><g transform="translate(941 93) scale(0.92)"><path d="M-7.5 -3L-1.5 -6.5L7.5 -4.5L2 -0.5Z" fill="#f0f6ff" stroke="#2848b8" stroke-width="0.7"/><path d="M-7.5 -3V4L2 7.5V-0.5Z" fill="url(#gB)" stroke="#2848b8" stroke-width="0.7"/><path d="M2 -0.5L7.5 -4.5V3L2 7.5Z" fill="#2050c8" stroke="#2040a0" stroke-width="0.7"/><rect x="-6" y="-2" width="3" height="3" fill="#f0a020"/><rect x="-5" y="3" width="3" height="2" fill="#e04040"/><path d="M-8 -6l5 2" fill="none" stroke="#888" stroke-width="0.8"/></g><g transform="translate(964.5 93) scale(0.92)"><rect x="-6" y="-1" width="9" height="9" fill="#20a890" stroke="#000" stroke-width="1" rx="1.2"/><circle cx="3" cy="-2" r="4.8" fill="#20a890" stroke="#000" stroke-width="1.2"/><path d="M-8 -5h5M-5.5 -7.5v5" fill="none" stroke="#e01020" stroke-width="1.4"/></g><g transform="translate(988 93) scale(0.92)"><circle cx="3" cy="-2" r="4.8" fill="none" stroke="#000" stroke-width="1.2"/><rect x="-6" y="-1" width="9" height="9" fill="#20a890" stroke="#000" stroke-width="1" rx="1.2"/><path d="M-8 -6h5" fill="none" stroke="#e01020" stroke-width="1.4"/></g><g transform="translate(1011.5 93) scale(0.92)"><rect x="-6" y="-1" width="9" height="9" fill="none" stroke="#000" stroke-width="1" rx="1.2"/><circle cx="3" cy="-2" r="4.8" fill="none" stroke="#000" stroke-width="1.2"/><path d="M-1.5 -1h4.5v4.5h-4.5z" fill="#208060"/><path d="M-8 -8l4 4m0 -4l-4 4" fill="none" stroke="#e01020" stroke-width="1.3"/></g><path d="M1024.5 95.5h6l-3 3.5z" fill="#000"/><rect x="2" y="106" width="719" height="25" fill="#dbdbdb"/><path d="M2.5 131V106.5H721" stroke="#f4f4f4" fill="none"/><path d="M2 130.5H720.5V106" stroke="#c4c4c4" fill="none"/><rect x="723" y="106" width="355" height="25" fill="#dbdbdb"/><path d="M723.5 131V106.5H1078" stroke="#f4f4f4" fill="none"/><path d="M723 130.5H1077.5V106" stroke="#c4c4c4" fill="none"/><rect x="7" y="111" width="2" height="2" fill="#a4a4a4"/><rect x="8" y="112" width="1" height="1" fill="#fff"/><rect x="7" y="115" width="2" height="2" fill="#a4a4a4"/><rect x="8" y="116" width="1" height="1" fill="#fff"/><rect x="7" y="119" width="2" height="2" fill="#a4a4a4"/><rect x="8" y="120" width="1" height="1" fill="#fff"/><rect x="7" y="123" width="2" height="2" fill="#a4a4a4"/><rect x="8" y="124" width="1" height="1" fill="#fff"/><rect x="7" y="127" width="2" height="2" fill="#a4a4a4"/><rect x="8" y="128" width="1" height="1" fill="#fff"/><rect x="727" y="111" width="2" height="2" fill="#a4a4a4"/><rect x="728" y="112" width="1" height="1" fill="#fff"/><rect x="727" y="115" width="2" height="2" fill="#a4a4a4"/><rect x="728" y="116" width="1" height="1" fill="#fff"/><rect x="727" y="119" width="2" height="2" fill="#a4a4a4"/><rect x="728" y="120" width="1" height="1" fill="#fff"/><rect x="727" y="123" width="2" height="2" fill="#a4a4a4"/><rect x="728" y="124" width="1" height="1" fill="#fff"/><rect x="727" y="127" width="2" height="2" fill="#a4a4a4"/><rect x="728" y="128" width="1" height="1" fill="#fff"/><g transform="translate(22 119) scale(0.92)"><path d="M-6 6L6 -6" fill="none" stroke="#000" stroke-width="1.3"/><rect x="-7.5" y="4.5" width="3" height="3" fill="#e02020"/><rect x="4.5" y="-7.5" width="3" height="3" fill="#e02020"/></g><g transform="translate(45 119) scale(0.92)"><path d="M-6 -6Q5 -6 6 6" fill="none" stroke="#000" stroke-width="1.3"/><rect x="-7.5" y="-7.5" width="3" height="3" fill="#e02020"/><rect x="4.5" y="4.5" width="3" height="3" fill="#e02020"/><rect x="-3.5" y="-8.0" width="3" height="3" fill="#e02020"/></g><g transform="translate(68 119) scale(0.92)"><circle cx="-3" cy="-2" r="4.5" fill="none" stroke="#3030c0" stroke-width="1.1"/><rect x="-4.5" y="-3.5" width="3" height="3" fill="#e02020"/><path d="M-6 4L2 7" fill="none" stroke="#3030c0" stroke-width="1"/><rect x="-7.5" y="2.5" width="3" height="3" fill="#e02020"/><rect x="0.5" y="5.5" width="3" height="3" fill="#e02020"/><path d="M5 -7Q8 -5 5.5 -3Q8 -1 5.5 1" fill="none" stroke="#e0b000" stroke-width="1.6"/><path d="M3 -7v9" fill="none" stroke="#40a040" stroke-width="0.8"/></g><g transform="translate(91 119) scale(0.92)"><circle cx="-2" cy="-2.5" r="4.5" fill="none" stroke="#000" stroke-width="1.2"/><rect x="-3.5" y="-4.0" width="3" height="3" fill="#e02020"/><path d="M-4 6L6 -3" fill="none" stroke="#000" stroke-width="1.3"/><rect x="-5.5" y="4.5" width="3" height="3" fill="#e02020"/><rect x="4.5" y="-4.5" width="3" height="3" fill="#e02020"/></g><g transform="translate(114 119) scale(0.92)"><path d="M-8 -1Q-4 -4 0 0Q4 4 8 -1" fill="none" stroke="#203040" stroke-width="1.5"/></g><g transform="translate(137.5 119) scale(0.92)"><path d="M-7 1L-3 -5L1 2L6 -2L3 6" fill="none" stroke="#40a0a0" stroke-width="1"/><path d="M-7 1Q-4 -3 -1 0Q2 4 6 -2" fill="none" stroke="#d02020" stroke-width="1.3"/><rect x="-8.5" y="-0.5" width="3" height="3" fill="#e02020"/><rect x="-4.5" y="-6.5" width="3" height="3" fill="#e02020"/><rect x="-0.5" y="0.5" width="3" height="3" fill="#e02020"/><rect x="4.5" y="-3.5" width="3" height="3" fill="#e02020"/><rect x="1.5" y="4.5" width="3" height="3" fill="#e02020"/></g><text x="152" y="126" font-family="Liberation Serif,serif" font-weight="bold" font-size="19" fill="#000">A</text><g transform="translate(183 119) scale(0.92)"><path d="M-7 0H7M0 -7V7" fill="none" stroke="#000" stroke-width="1.3"/></g><g transform="translate(206 119) scale(0.92)"><path d="M-8 -5h5M-5.5 -7.5v5M-3 0h5M-0.5 -2.5v5M3 5h5M5.5 2.5v5" fill="none" stroke="#404040" stroke-width="1"/></g><g transform="translate(228.5 119) scale(0.92)"><rect x="-6.5" y="-5" width="13" height="10" fill="none" stroke="#000" stroke-width="1" rx="1.3"/><rect x="-8.0" y="-6.5" width="3" height="3" fill="#e02020"/><rect x="5.0" y="3.5" width="3" height="3" fill="#e02020"/></g><g transform="translate(252 119) scale(0.92)"><path d="M-4 -6.5H4L7 -3V3L4 6.5H-4L-7 3V-3Z" fill="none" stroke="#000" stroke-width="1.2"/><rect x="-1.5" y="-1.5" width="3" height="3" fill="#e02020"/></g><path d="M267.5 110V129" stroke="#bdbdbd"/><path d="M268.5 110V129" stroke="#f6f6f6"/><g transform="translate(281 119) scale(0.92)"><ellipse cx="0" cy="0" rx="7.5" ry="4.5" fill="none" stroke="#000" stroke-width="1.3"/><rect x="-1.5" y="-1.5" width="3" height="3" fill="#e02020"/></g><g transform="translate(304 119) scale(0.92)"><ellipse cx="0" cy="-3.5" rx="6.5" ry="3" fill="#b8d4f4" stroke="#5070a0" stroke-width="1.5"/><ellipse cx="0" cy="0" rx="7.5" ry="3.3" fill="#a8c8f0" stroke="#5878a8" stroke-width="1.5"/><ellipse cx="0" cy="3.5" rx="6.5" ry="3" fill="#b8d4f4" stroke="#5070a0" stroke-width="1.5"/><path d="M-2 6.5Q-3 8.5 -1 8.5" fill="none" stroke="#5070a0" stroke-width="1.2"/></g><text x="319" y="117" font-family="Liberation Sans,sans-serif" font-weight="bold" font-size="7.5" fill="#e02020" textLength="16">XYZ=</text><g transform="translate(327 119) scale(0.92)"><path d="M-7 4Q-3 1 0 4Q3 7 8 3" fill="none" stroke="#000" stroke-width="1.3"/></g><g transform="translate(350.5 119) scale(0.92)"><path d="M-7 -3L-3 -7H1Q3 -3 5 -4Q8 -2 7 2L2 7H-7Z" fill="#fde8ec" stroke="#301018" stroke-width="1.1"/><path d="M-4.5 -2L-2 -4.5H0Q2 -0.5 4.5 -1.5Q5 0 4.5 1.5L1 4.5H-4.5Z" fill="none" stroke="#d03040" stroke-width="1"/></g><g transform="translate(373 119) scale(0.92)"><path d="M-5 -7Q-8 -4 -5 -2.5Q-1 -1 -2 3Q-3 7 -7 6" fill="none" stroke="#1c2c2c" stroke-width="1.3"/><path d="M7.5 -5Q2.5 -7 2.5 -2Q2.5 4 7.5 4.5" fill="none" stroke="#1c2c2c" stroke-width="1.3"/><rect x="-1.8" y="-3.5" width="2.6" height="7" fill="#f06820"/><rect x="0.8" y="-3" width="1.8" height="6.5" fill="#f0b8c8"/></g><g transform="translate(396.5 119) scale(0.92)"><path d="M-7 0L-2 -5L2 1L7 -2L1 7" fill="none" stroke="#40a0a0" stroke-width="1"/><path d="M-2 -5V-8M-2 -5L2 1" fill="none" stroke="#d02020" stroke-width="1.4"/><rect x="-8.5" y="-1.5" width="3" height="3" fill="#e02020"/><rect x="-3.5" y="-6.5" width="3" height="3" fill="#e02020"/><rect x="0.5" y="-0.5" width="3" height="3" fill="#e02020"/><rect x="5.5" y="-3.5" width="3" height="3" fill="#e02020"/><rect x="-0.5" y="5.5" width="3" height="3" fill="#e02020"/></g><path d="M411.5 117.0h6l-3 3.5z" fill="#000"/><g transform="translate(431 119) scale(0.92)"><path d="M-7 -7H7" fill="none" stroke="#203080" stroke-width="1.4"/><path d="M3 -7V8" fill="none" stroke="#203080" stroke-width="1.2"/><circle cx="2" cy="-1" r="4.5" fill="#fff" stroke="#a0b0d0" stroke-width="0.8"/><path d="M-7 -2L-2 -4L0 3L-6 4Z" fill="url(#gLB)" stroke="#6080c0" stroke-width="0.6"/><rect x="-7.5" y="0.5" width="3" height="3" fill="#e02020"/></g><g transform="translate(454 119) scale(0.92)"><path d="M-5 -7Q-8 -4 -5 -2.5Q-1 -1 -2 3Q-3 7 -7 6" fill="none" stroke="#1c2c2c" stroke-width="1.3"/><path d="M7.5 -5Q2.5 -7 2.5 -2Q2.5 4 7.5 4.5" fill="none" stroke="#1c2c2c" stroke-width="1.3"/><rect x="-1.8" y="-3.5" width="2.6" height="7" fill="#f06820"/><rect x="0.8" y="-3" width="1.8" height="6.5" fill="#f0b8c8"/></g><g transform="translate(477 119) scale(0.92)"><path d="M-5 -7Q-8 -4 -5 -2.5Q-1 -1 -2 3Q-3 7 -7 6" fill="none" stroke="#1c2c2c" stroke-width="1.3"/><path d="M7.5 -5Q2.5 -7 2.5 -2Q2.5 4 7.5 4.5" fill="none" stroke="#1c2c2c" stroke-width="1.3"/><rect x="-1.8" y="-3.5" width="2.6" height="7" fill="#f06820"/><rect x="0.8" y="-3" width="1.8" height="6.5" fill="#f0b8c8"/></g><g transform="translate(501 119) scale(0.92)"><path d="M-7 1L3 -1L8 2L6 7L-5 8Z" fill="#dce8ff" stroke="#2848c8" stroke-width="1"/><path d="M-5 4Q0 2 6 4" fill="none" stroke="#e03030" stroke-width="1.3"/><path d="M0 -7V0M-4 -7H4" fill="none" stroke="#d04020" stroke-width="1.5"/></g><path d="M516.5 117.0h6l-3 3.5z" fill="#000"/><g transform="translate(536 119) scale(0.92)"><path d="M-7 1L3 -1L8 2L6 7L-5 8Z" fill="#dce8ff" stroke="#2848c8" stroke-width="1"/><path d="M-5 4Q0 2 6 4" fill="none" stroke="#e03030" stroke-width="1.3"/><path d="M0 -7V0M-4 -7H4" fill="none" stroke="#d04020" stroke-width="1.5"/></g><g transform="translate(559 119) scale(0.92)"><path d="M-6 -7L-1 -6V7L-6 5ZM0 -6L6 -7V6L0 7Z" fill="#fff8c0" stroke="#e0c040" stroke-width="0.8"/><path d="M-3 -6L3 -7V7L-3 6Z" fill="#fffbe0" stroke="#e0c040" stroke-width="0.8"/></g><g transform="translate(582 119) scale(0.92)"><path d="M-6 -7H7V3L2 7H-6Z" fill="url(#gLB)" stroke="#5878c8" stroke-width="0.7"/><path d="M-7 7L-2 -2" fill="none" stroke="#303850" stroke-width="1"/><path d="M0 -3L5 2" fill="none" stroke="#e04060" stroke-width="1"/></g><g transform="translate(604 119) scale(0.92)"><path d="M-7 -3L-2 -7L7 -5V5L1 7Z" fill="url(#gLB)" stroke="#5878c8" stroke-width="0.7"/><path d="M2 -6Q-2 0 3 6" fill="none" stroke="#e04060" stroke-width="1"/><path d="M-7 -3L1 7" fill="none" stroke="#3858b0" stroke-width="0.8"/></g><g transform="translate(627.5 119) scale(0.92)"><path d="M-7.5 -6L-1 -8V6L-7.5 8ZM1 -8L7.5 -6V8L1 6Z" fill="#fff" stroke="#000" stroke-width="1.3"/><circle cx="-3.5" cy="0" r="2.3" fill="none" stroke="#d02020" stroke-width="1.2"/><circle cx="4" cy="0" r="2.3" fill="none" stroke="#d02020" stroke-width="1.2"/><path d="M-1 -8V7" fill="none" stroke="#3050c0" stroke-width="0.8"/></g><g transform="translate(650 119) scale(0.92)"><path d="M-7 -5V5Q-4 7 -1 5V-5Z" fill="url(#gB)" stroke="#2848b8" stroke-width="0.7"/><ellipse cx="-4" cy="-5" rx="3" ry="1.6" fill="#dce8ff" stroke="#2848b8" stroke-width="0.6"/><path d="M2 -5Q6 0 2 5M5 -6Q9 0 5 6" fill="none" stroke="#e03030" stroke-width="1.2"/><path d="M1 0h5" fill="none" stroke="#f08020" stroke-width="1.3"/></g><g transform="translate(673 119) scale(0.92)"><path d="M-8 0L-1 -7L8 -3L1 5Z" fill="url(#gLB)" stroke="#7090d0" stroke-width="0.7"/><path d="M-4 4L5 7L8 2" fill="url(#gB)" stroke="#5070c0" stroke-width="0.5"/><path d="M0 -2L4 -5" fill="none" stroke="#e04040" stroke-width="1.2"/></g><g transform="translate(696 119) scale(0.92)"><path d="M-6 -6L0 -7V2Q0 6 3 8Q-4 7 -6 2Z" fill="url(#gY)" stroke="#d0a020" stroke-width="0.6"/><path d="M0 -7L5 -6V1Q5 5 3 8Q0 6 0 2Z" fill="url(#gB)" stroke="#3860c0" stroke-width="0.6"/></g><path d="M710.5 122.0h6l-3 3.5z" fill="#000"/><g transform="translate(742 119) scale(0.92)"><g transform="translate(-0.5 0.5)"><path d="M-7.5 -3L-1.5 -6.5L7.5 -4.5L2 -0.5Z" fill="#f0f6ff" stroke="#2848b8" stroke-width="0.7"/><path d="M-7.5 -3V4L2 7.5V-0.5Z" fill="url(#gB)" stroke="#2848b8" stroke-width="0.7"/><path d="M2 -0.5L7.5 -4.5V3L2 7.5Z" fill="#2050c8" stroke="#2040a0" stroke-width="0.7"/></g><path d="M4 -7l4 1.5M4 -4l4 1.5M4 -1l4 1.5" fill="none" stroke="#e03030" stroke-width="1.1"/><path d="M-1 -8v3M2 -8v3" fill="none" stroke="#404040" stroke-width="0.8"/></g><g transform="translate(765 119) scale(0.92)"><path d="M-6 7L-2 -1Q-6 -4 -3 -7Q1 -8 2 -4Q2 -2 0 -1L-3 7Z" fill="url(#gY)" stroke="#c09000" stroke-width="0.7"/><circle cx="4" cy="1" r="3.5" fill="none" stroke="#3050c0" stroke-width="2"/><path d="M-6 -7Q-3 -9 -1 -7" fill="none" stroke="#203080" stroke-width="1.2"/></g><g transform="translate(788.5 119) scale(0.92)"><path d="M-8 1L-1 -1L8 1V4L0 7L-8 4Z" fill="url(#gB)" stroke="#3860c8" stroke-width="0.6"/><path d="M-2 -5L2 -6V1L-2 2Z" fill="url(#gLB)" stroke="#5878c8" stroke-width="0.6"/><path d="M-8 1L0 3L8 1" fill="none" stroke="#dce8ff" stroke-width="0.7"/><path d="M-8 -4H-2" fill="none" stroke="#f06020" stroke-width="2"/></g><g transform="translate(811 119) scale(0.92)"><path d="M-8 1L-1 -1L8 1V4L0 7L-8 4Z" fill="url(#gB)" stroke="#3860c8" stroke-width="0.6"/><path d="M-2 -5L2 -6V1L-2 2Z" fill="url(#gLB)" stroke="#5878c8" stroke-width="0.6"/><path d="M-8 1L0 3L8 1" fill="none" stroke="#dce8ff" stroke-width="0.7"/><path d="M-1 -5L6 -7V-4L-1 -2Z" fill="#f8b040" stroke="#d07000" stroke-width="0.5"/></g><g transform="translate(834 119) scale(0.92)"><path d="M-8 1L-1 -1L8 1V4L0 7L-8 4Z" fill="url(#gB)" stroke="#3860c8" stroke-width="0.6"/><path d="M-2 -5L2 -6V1L-2 2Z" fill="url(#gLB)" stroke="#5878c8" stroke-width="0.6"/><path d="M-8 1L0 3L8 1" fill="none" stroke="#dce8ff" stroke-width="0.7"/><path d="M-7 -5L-1 -6V-3L-7 -2Z" fill="#f8b040" stroke="#d07000" stroke-width="0.5"/><path d="M2 -6L7 -5" fill="none" stroke="#f08020" stroke-width="1.5"/></g><path d="M849.5 110V129" stroke="#bdbdbd"/><path d="M850.5 110V129" stroke="#f6f6f6"/><g transform="translate(863 119) scale(0.92)"><path d="M-8 1L-1 -1L8 1V4L0 7L-8 4Z" fill="url(#gB)" stroke="#3860c8" stroke-width="0.6"/><path d="M-2 -5L2 -6V1L-2 2Z" fill="url(#gLB)" stroke="#5878c8" stroke-width="0.6"/><path d="M-8 1L0 3L8 1" fill="none" stroke="#dce8ff" stroke-width="0.7"/><path d="M2 -6L7 -8V-5L2 -3Z" fill="#f8c060" stroke="#d08000" stroke-width="0.5"/></g><g transform="translate(886 119) scale(0.92)"><path d="M-8 1L-1 -1L8 1V4L0 7L-8 4Z" fill="url(#gB)" stroke="#3860c8" stroke-width="0.6"/><path d="M-2 -5L2 -6V1L-2 2Z" fill="url(#gLB)" stroke="#5878c8" stroke-width="0.6"/><path d="M-8 1L0 3L8 1" fill="none" stroke="#dce8ff" stroke-width="0.7"/></g><g transform="translate(908.5 119) scale(0.92)"><path d="M-8 1L-1 -1L8 1V4L0 7L-8 4Z" fill="url(#gB)" stroke="#3860c8" stroke-width="0.6"/><path d="M-2 -5L2 -6V1L-2 2Z" fill="url(#gLB)" stroke="#5878c8" stroke-width="0.6"/><path d="M-8 1L0 3L8 1" fill="none" stroke="#dce8ff" stroke-width="0.7"/><path d="M-2 -5L2 -6V-3L-2 -2Z" fill="#fff"/></g><g transform="translate(932 119) scale(0.92)"><path d="M-8 1L-1 -1L8 1V4L0 7L-8 4Z" fill="url(#gB)" stroke="#3860c8" stroke-width="0.6"/><path d="M-2 -5L2 -6V1L-2 2Z" fill="url(#gLB)" stroke="#5878c8" stroke-width="0.6"/><path d="M-8 1L0 3L8 1" fill="none" stroke="#dce8ff" stroke-width="0.7"/><rect x="2" y="-8" width="6" height="5" fill="#182080"/><path d="M3 -4v-3l2 2l2 -2v3" fill="none" stroke="#fff" stroke-width="0.8"/></g><g transform="translate(955 119) scale(0.92)"><path d="M-6 -6L5 5M5 -6L-6 5" fill="none" stroke="#000" stroke-width="1.5"/><path d="M-8 7H3M-8 5v4M3 5v4" fill="none" stroke="#000" stroke-width="1"/><path d="M7 -8V3M5 -8h4M5 3h4" fill="none" stroke="#000" stroke-width="1"/><rect x="6" y="-3" width="2.5" height="2.5" fill="#e03030"/></g><g transform="translate(978 119) scale(0.92)"><path d="M0 -7L7 6Q0 9 -7 6Z" fill="url(#gY)" stroke="#c08000" stroke-width="0.7"/><path d="M0 -7L3 7L7 6Z" fill="#f09020"/><path d="M-4 -6L5 -3" fill="none" stroke="#e03030" stroke-width="1.2"/><rect x="5" y="-8" width="3" height="5" fill="#182080"/><path d="M-8 7L0 -7" fill="none" stroke="#404040" stroke-width="0.8"/></g><path d="M993.5 110V129" stroke="#bdbdbd"/><path d="M994.5 110V129" stroke="#f6f6f6"/><g transform="translate(1006.5 119) scale(0.92)"><circle cx="-3" cy="-3" r="4" fill="url(#gLB)" stroke="#3860c0" stroke-width="1.3"/><path d="M-4 1L2 -1L6 1V5L0 7L-4 5Z" fill="url(#gB)" stroke="#3860c8" stroke-width="0.6"/><rect x="3" y="3" width="5" height="5" fill="#dce8ff" stroke="#3050a0" stroke-width="1" rx="0.8"/></g><g transform="translate(1030 119) scale(0.92)"><circle cx="-3" cy="-3" r="4" fill="#c4c4c4" stroke="#909090" stroke-width="1.3"/><path d="M-5 1L2 -1L7 1V5L0 8L-5 5Z" fill="#a8a8a8" stroke="#8c8c8c" stroke-width="0.6"/><path d="M0 -3L3 -4V2L0 3Z" fill="#b8b8b8"/></g><g transform="translate(1053 119) scale(0.92)"><path d="M-8 1L-1 -1L8 1V4L0 7L-8 4Z" fill="url(#gB)" stroke="#3860c8" stroke-width="0.6"/><path d="M-2 -5L2 -6V1L-2 2Z" fill="url(#gLB)" stroke="#5878c8" stroke-width="0.6"/><path d="M-8 1L0 3L8 1" fill="none" stroke="#dce8ff" stroke-width="0.7"/><path d="M3 -8L8 -5L3 -2Z" fill="#e01020"/></g><path d="M1068.5 122.0h6l-3 3.5z" fill="#000"/><rect x="0" y="154" width="27" height="568" fill="#e2e2e2"/><path d="M0.5 722V154.5H26" stroke="#f0f0f0" fill="none"/><path d="M0 721.5H25.5V154" stroke="#d2d2d2" fill="none"/><rect x="6" y="158" width="2" height="2" fill="#9c9c9c"/><rect x="7" y="159" width="1" height="1" fill="#fff"/><rect x="10" y="158" width="2" height="2" fill="#9c9c9c"/><rect x="11" y="159" width="1" height="1" fill="#fff"/><rect x="14" y="158" width="2" height="2" fill="#9c9c9c"/><rect x="15" y="159" width="1" height="1" fill="#fff"/><rect x="18" y="158" width="2" height="2" fill="#9c9c9c"/><rect x="19" y="159" width="1" height="1" fill="#fff"/><path d="M3 187.5H23" stroke="#bdbdbd"/><path d="M3 188.5H23" stroke="#f8f8f8"/><path d="M3 378.5H23" stroke="#bdbdbd"/><path d="M3 379.5H23" stroke="#f8f8f8"/><path d="M3 545.5H23" stroke="#bdbdbd"/><path d="M3 546.5H23" stroke="#f8f8f8"/><g transform="translate(13 171.5)"><path d="M-6 -2L0 -6L7 -1L-1 5Z" fill="#fde8f8" stroke="#a03080" stroke-width="0.9"/><path d="M-3 -4L4 2M0 -6L-5 1M3 -3.5L-3 3" fill="none" stroke="#a03080" stroke-width="0.6"/><circle cx="-6" cy="-2" r="1.2" fill="#802060"/><circle cx="0" cy="-6" r="1.2" fill="#802060"/><circle cx="7" cy="-1" r="1.2" fill="#802060"/><circle cx="-1" cy="5" r="1.2" fill="#802060"/><circle cx="-3" cy="-4" r="1.2" fill="#802060"/><circle cx="3.5" cy="-3.5" r="1.2" fill="#802060"/><circle cx="3" cy="2" r="1.2" fill="#802060"/><circle cx="-3.5" cy="1.5" r="1.2" fill="#802060"/></g><g transform="translate(13 201.5)"><path d="M-7 -4Q0 -7 7 -5L6 4Q0 2 -5 6Z" fill="url(#gBP)" stroke="#4850c8" stroke-width="0.8"/></g><g transform="translate(13 225.5)"><path d="M-7 -4Q0 -7 7 -5L6 4Q0 2 -5 6Z" fill="url(#gBP)" stroke="#4850c8" stroke-width="0.8"/><path d="M-3 -5.5L-2 3.5M1.5 -6L2 3" fill="none" stroke="#4850c8" stroke-width="0.6"/></g><g transform="translate(13 247.5)"><path d="M-7 -4Q0 -7 7 -5L6 4Q0 2 -5 6Z" fill="url(#gBP)" stroke="#4850c8" stroke-width="0.8"/><path d="M-3 -5.5L-2 3.5M1.5 -6L2 3" fill="none" stroke="#4850c8" stroke-width="0.6"/></g><g transform="translate(13 271)"><path d="M-6 -3Q0 -7 6 -4L5 4Q0 1 -5 5Z" fill="#fff" stroke="#e03030" stroke-width="0.9"/><rect x="3" y="1" width="4" height="4" fill="#f08020"/><rect x="-7" y="-7" width="4" height="3" fill="#e0a020"/></g><g transform="translate(13 293.5)"><circle cx="2" cy="-3" r="3.5" fill="none" stroke="#000" stroke-width="1.3"/><path d="M-7 1Q-3 -1 -3 3Q-3 6 -7 6" fill="none" stroke="#000" stroke-width="1.3"/><circle cx="2" cy="-3" r="1.2" fill="#20a030"/><rect x="1" y="1" width="6" height="5" fill="#602090"/><circle cx="-4" cy="6" r="1.3" fill="#20a030"/></g><g transform="translate(13 316)"><path d="M-7 0L2 -6L7 -2L-2 5Z" fill="#fff8d0" stroke="#5070c8" stroke-width="0.8"/><path d="M-4 -1L3 2M-2 -3L4 0M-5 1.5L1 4" fill="none" stroke="#f0a020" stroke-width="1"/></g><g transform="translate(13 339)"><path d="M-6 -5Q0 -7 7 -5V5Q0 3 -6 6Z" fill="url(#gLB)" stroke="#4060c0" stroke-width="0.9"/><path d="M-3 2Q0 -4 4 2" fill="none" stroke="#4060c0" stroke-width="1"/></g><g transform="translate(13 362.5)"><path d="M-2 -7L3 -7L5 5L-5 6Z" fill="url(#gO)" stroke="#d08000" stroke-width="0.5"/><path d="M-8 2L-3 0M4 3L8 5" fill="none" stroke="#4080e0" stroke-width="1.3"/><path d="M0 -7L3 -4" fill="none" stroke="#80a8f0" stroke-width="2"/></g><g transform="translate(13 391.5)"><path d="M-7 -3L1 -6L7 0L-1 5Z" fill="#f4d8f8" stroke="#a040b0" stroke-width="0.9"/><path d="M-4 -4L3 3M-1 -5.2L5 1.5M-5 -0.5L3 -4M-3 2L5 -2" fill="none" stroke="#6080d0" stroke-width="0.7"/></g><g transform="translate(13 414)"><path d="M-7 -4Q-2 -7 2 -4Q5 -2 7 -5V2Q3 4 0 2Q-3 0 -7 3Z" fill="#fff" stroke="#101850" stroke-width="1"/><path d="M-7 3Q-3 0 0 2Q3 4 7 2V4Q2 8 -7 6Z" fill="#182888"/></g><g transform="translate(13 438)"><path d="M-6 -4L2 -6L7 -4V-1L-1 1Z" fill="#60c0b0" stroke="#309080" stroke-width="0.5"/><path d="M-6 -1L-1 1L7 -1V2L-1 4Z" fill="#f8e060" stroke="#c0a020" stroke-width="0.5"/><path d="M-6 2L-1 4L7 2V5L0 8L-6 5Z" fill="url(#gO)" stroke="#c06000" stroke-width="0.5"/></g><g transform="translate(13 460.5)"><path d="M-7 -6L-2 -7V0L-7 1Z" fill="url(#gB)" stroke="#3050c0" stroke-width="0.6"/><path d="M-5 0L2 -2L7 0V5L0 7L-5 5Z" fill="url(#gY)" stroke="#c09000" stroke-width="0.6"/><path d="M2 -2L7 0V5" fill="#f09020"/><path d="M-7 2L-3 4" fill="none" stroke="#f08020" stroke-width="1.5"/></g><g transform="translate(13 485)"><path d="M-7 -4Q0 -6 7 -4V0Q0 -2 -7 0Z" fill="url(#gB)" stroke="#3050c0" stroke-width="0.6"/><path d="M-6 0Q0 -2 5 0V3Q0 1 -6 3Z" fill="url(#gY)" stroke="#c09000" stroke-width="0.5"/><path d="M5 -6V7M3 -4L5 -7L7 -4M3 5L5 8L7 5" fill="none" stroke="#e03030" stroke-width="1.2"/></g><g transform="translate(13 507.5)"><path d="M-7 2L0 -6L7 2L4 3L0 -2L-4 3Z" fill="url(#gB)" stroke="#3060c8" stroke-width="0.6"/><path d="M-7 6L0 -1L7 6L4 7L0 3L-4 7Z" fill="url(#gO)" stroke="#d06000" stroke-width="0.6"/></g><g transform="translate(13 530)"><path d="M-7 3L0 0L7 3L0 7Z" fill="#fff" stroke="#88a8e0" stroke-width="0.7"/><path d="M-6 -4Q0 -7 6 -4Q0 -1 -6 -4Z" fill="url(#gY)" stroke="#d0a020" stroke-width="0.5"/><path d="M0 -3V2" fill="none" stroke="#a06020" stroke-width="1.2"/><circle cx="0" cy="0" r="1.5" fill="#c07020"/></g><g transform="translate(13 558.5)"><path d="M-6 3L0 0L7 3L0 7Z" fill="url(#gY)" stroke="#e05020" stroke-width="0.9"/><path d="M-5 -6V0M-7 -4L-5 -7L-3 -4" fill="none" stroke="#e03030" stroke-width="1.2"/><circle cx="3" cy="-4" r="2.8" fill="none" stroke="#e03030" stroke-width="1.2"/></g><g transform="translate(13 581.7)"><path d="M-7 -2L0 -5L7 -2L0 1Z" fill="url(#gO)" stroke="#e04010" stroke-width="0.8"/><path d="M-7 1L0 -2L7 1L0 4Z" fill="url(#gO)" stroke="#e04010" stroke-width="0.8"/><path d="M-7 4L0 1L7 4L0 7Z" fill="#f8b020" stroke="#e04010" stroke-width="0.8"/></g><g transform="translate(13 604)"><path d="M-6 1L0 -4L6 0L2 7L-4 6Z" fill="url(#gB)" stroke="#3060c8" stroke-width="0.6"/><path d="M-2 -7Q3 -8 5 -3" fill="none" stroke="#a0b8e8" stroke-width="1.5"/><path d="M-5 -5L-2 -7" fill="none" stroke="#e04040" stroke-width="1.2"/></g><g transform="translate(13 627.6)"><path d="M-6 5L-1 -6L6 -7V4L0 7Z" fill="url(#gO)" stroke="#e07000" stroke-width="0.5"/><path d="M-6 5L0 1L6 4" fill="none" stroke="#f8e080" stroke-width="1.2"/><path d="M-6 5L0 7L6 4L0 1Z" fill="#f8d040"/></g><g transform="translate(13 651)"><path d="M-7 1Q-3 -3 0 0Q3 3 6 -1L7 4Q2 8 -5 6Z" fill="url(#gLB)" stroke="#6060c8" stroke-width="0.8"/><path d="M1 0L6 -6" fill="none" stroke="#f09020" stroke-width="1.5"/><circle cx="6" cy="-6" r="1.8" fill="#f0a020"/></g><g transform="translate(13 673.5)"><path d="M-7 5L0 2L7 5L0 8Z" fill="#f8d040" stroke="#d0a000" stroke-width="0.5"/><path d="M-4 -4V4Q0 6 4 4V-4" fill="#fff" stroke="#d02020" stroke-width="1.1"/><ellipse cx="0" cy="-4" rx="4" ry="1.8" fill="#fff" stroke="#d02020" stroke-width="1.1"/><path d="M-1.5 -2.5V5M1.5 -2.5V5" fill="none" stroke="#d02020" stroke-width="0.8"/></g><g transform="translate(13 698)"><path d="M-6 -4Q0 -9 6 -4V5Q0 1 -6 6Z" fill="url(#gO)" stroke="#d08030" stroke-width="0.7"/><path d="M-2 -6.5V3M2 -6.5V3" fill="none" stroke="#f8e890" stroke-width="1"/></g><path d="M9 711.0V718.0L5 714.5Z" fill="#000"/><rect x="27" y="154" width="38" height="240" fill="#e2e2e2"/><path d="M27.5 394V154.5H64" stroke="#f0f0f0" fill="none"/><path d="M27 393.5H63.5V154" stroke="#d2d2d2" fill="none"/><rect x="33" y="164" width="2" height="2" fill="#9c9c9c"/><rect x="34" y="165" width="1" height="1" fill="#fff"/><rect x="37" y="164" width="2" height="2" fill="#9c9c9c"/><rect x="38" y="165" width="1" height="1" fill="#fff"/><rect x="41" y="164" width="2" height="2" fill="#9c9c9c"/><rect x="42" y="165" width="1" height="1" fill="#fff"/><rect x="45" y="164" width="2" height="2" fill="#9c9c9c"/><rect x="46" y="165" width="1" height="1" fill="#fff"/><rect x="49" y="164" width="2" height="2" fill="#9c9c9c"/><rect x="50" y="165" width="1" height="1" fill="#fff"/><rect x="53" y="164" width="2" height="2" fill="#9c9c9c"/><rect x="54" y="165" width="1" height="1" fill="#fff"/><rect x="57" y="164" width="2" height="2" fill="#9c9c9c"/><rect x="58" y="165" width="1" height="1" fill="#fff"/><path d="M29 308.5H62" stroke="#bdbdbd"/><path d="M29 309.5H62" stroke="#f8f8f8"/><g transform="translate(45 179)"><path d="M-6 -1L1 -6L7 -2L-1 4Z" fill="#f8e0f8" stroke="#a03090" stroke-width="0.8"/><circle cx="-6" cy="-1" r="1.1" fill="#702070"/><circle cx="1" cy="-6" r="1.1" fill="#702070"/><circle cx="7" cy="-2" r="1.1" fill="#702070"/><circle cx="-1" cy="4" r="1.1" fill="#702070"/><circle cx="-2.5" cy="-3.5" r="1.1" fill="#702070"/><circle cx="4" cy="-4" r="1.1" fill="#702070"/><circle cx="3" cy="1" r="1.1" fill="#702070"/><path d="M-6 2L-2 0L0 3L3 2L1 6L-4 7Z" fill="url(#gY)" stroke="#c09000" stroke-width="0.6"/></g><g transform="translate(45 201.5)"><path d="M-6 -1L1 -6L7 -2L-1 4Z" fill="#f8e0f8" stroke="#a03090" stroke-width="0.8"/><circle cx="-6" cy="-1" r="1.1" fill="#702070"/><circle cx="1" cy="-6" r="1.1" fill="#702070"/><circle cx="7" cy="-2" r="1.1" fill="#702070"/><circle cx="-1" cy="4" r="1.1" fill="#702070"/><circle cx="-2.5" cy="-3.5" r="1.1" fill="#702070"/><circle cx="4" cy="-4" r="1.1" fill="#702070"/><circle cx="3" cy="1" r="1.1" fill="#702070"/><path d="M-6 2L-2 0L0 3L3 2L1 6L-4 7Z" fill="url(#gY)" stroke="#c09000" stroke-width="0.6"/><path d="M-5 -5L0 -8L5 -5" fill="none" stroke="#8040c0" stroke-width="1.2"/></g><g transform="translate(45 224.7)"><path d="M-7 -1Q0 -8 7 -3L3 6Q-2 3 -7 -1Z" fill="#e8f0ff" stroke="#b03070" stroke-width="1"/><path d="M-3 -2Q1 -5 4 -2L2 2Q0 0 -3 -2Z" fill="#a8c0f0" stroke="#6080c0" stroke-width="0.6"/></g><g transform="translate(45 247.5)"><path d="M-7 2Q-4 -6 3 -6L7 -2Q1 -2 -2 5Z" fill="#f0e8ff" stroke="#b04080" stroke-width="1"/><path d="M-2 5Q1 -2 7 -2L6 2Q2 3 0 7Z" fill="url(#gLB)" stroke="#5070c0" stroke-width="0.7"/></g><g transform="translate(45 270.5)"><path d="M-5 -3L0 -7L6 -3L3 1L-2 -1Z" fill="#fff" stroke="#c06080" stroke-width="0.8"/><path d="M-7 3L-2 0L1 3L5 1L3 6L-4 7Z" fill="url(#gY)" stroke="#a0a040" stroke-width="0.6"/><path d="M-6 -6L-3 -3" fill="none" stroke="#6080d0" stroke-width="1"/></g><g transform="translate(45 294)"><path d="M-7 -5Q0 -8 7 -5L6 -1Q0 -3 -6 -1ZM-6 3Q0 0 6 3L7 7Q0 4 -7 7Z" fill="url(#gB)" stroke="#3050c0" stroke-width="0.6"/><path d="M0 -2V4" fill="none" stroke="#e04020" stroke-width="1.6"/><path d="M-7 -1Q-4 1 -6 3" fill="none" stroke="#f08020" stroke-width="1"/></g><g transform="translate(45 322)"><text x="-7.5" y="6" font-family="Liberation Sans,sans-serif" font-weight="bold" font-size="14" fill="#505050">x</text><text x="0" y="-1" font-family="Liberation Sans,sans-serif" font-weight="bold" font-size="7" fill="#606060">2</text><text x="4" y="-3" font-family="Liberation Sans,sans-serif" font-weight="bold" font-size="7" fill="#e02020">3</text></g><g transform="translate(45 346)"><path d="M-7 -5Q0 -8 7 -5L6 -1Q0 -3 -6 -1Z" fill="url(#gB)" stroke="#3050c0" stroke-width="0.6"/><path d="M-7 4Q-4 0 0 3Q4 0 7 3Q4 8 0 5Q-4 8 -7 4Z" fill="url(#gO)" stroke="#d06000" stroke-width="0.6"/><path d="M0 -2V3" fill="none" stroke="#f0d020" stroke-width="1.3"/></g><g transform="translate(45 367)"><path d="M-7 -4Q-4 -6 -2 -4V5Q-4 3 -7 5ZM2 -4Q4 -6 7 -4V5Q4 3 2 5Z" fill="url(#gB)" stroke="#3050c0" stroke-width="0.6"/><rect x="-2" y="-3" width="4" height="7" fill="#90b0f0"/><path d="M0 -8V8" fill="none" stroke="#e05020" stroke-width="1.4"/><path d="M-2 -5L0 -8.5L2 -5" fill="#e05020"/></g><path d="M36 383.0V390.0L32 386.5Z" fill="#000"/><rect x="27" y="394" width="38" height="5" fill="#dcdcdc"/><rect x="27" y="399" width="38" height="298" fill="#e2e2e2"/><path d="M27.5 697V399.5H64" stroke="#f0f0f0" fill="none"/><path d="M27 696.5H63.5V399" stroke="#d2d2d2" fill="none"/><rect x="33" y="404" width="2" height="2" fill="#9c9c9c"/><rect x="34" y="405" width="1" height="1" fill="#fff"/><rect x="37" y="404" width="2" height="2" fill="#9c9c9c"/><rect x="38" y="405" width="1" height="1" fill="#fff"/><rect x="41" y="404" width="2" height="2" fill="#9c9c9c"/><rect x="42" y="405" width="1" height="1" fill="#fff"/><rect x="45" y="404" width="2" height="2" fill="#9c9c9c"/><rect x="46" y="405" width="1" height="1" fill="#fff"/><rect x="49" y="404" width="2" height="2" fill="#9c9c9c"/><rect x="50" y="405" width="1" height="1" fill="#fff"/><rect x="53" y="404" width="2" height="2" fill="#9c9c9c"/><rect x="54" y="405" width="1" height="1" fill="#fff"/><rect x="57" y="404" width="2" height="2" fill="#9c9c9c"/><rect x="58" y="405" width="1" height="1" fill="#fff"/><g transform="translate(44 418.5)"><circle cx="0" cy="0" r="7" fill="url(#gS)"/></g><g transform="translate(39.5 441.7)"><circle cx="0" cy="0" r="6.5" fill="#a8a0a0" stroke="#8c8484" stroke-width="1"/></g><path d="M53.5 440.5h6l-3 3.5z" fill="#000"/><g transform="translate(39.5 465)"><circle cx="0" cy="0" r="6.5" fill="#a8a0a0" stroke="#8c8484" stroke-width="1"/></g><path d="M53.5 464.0h6l-3 3.5z" fill="#000"/><g transform="translate(39.5 488)"><circle cx="0" cy="0" r="6" fill="none" stroke="#a89c9c" stroke-width="2"/><path d="M-4 4L4 -4" fill="none" stroke="#a89c9c" stroke-width="2"/></g><path d="M53.5 487.0h6l-3 3.5z" fill="#000"/><g transform="translate(39.5 510.5)"><rect x="-8" y="-7.5" width="16" height="15" fill="#909090" stroke="#a8a8a8" stroke-width="1" rx="1.5"/><path d="M-4 -7v14M0 -7v14M4 -7v14M-8 -3.5h16M-8 0h16M-8 3.5h16" fill="none" stroke="#7c7c7c" stroke-width="0.5"/></g><path d="M53.5 509.5h6l-3 3.5z" fill="#000"/><rect x="34.5" y="523.5" width="22" height="22" rx="3" fill="#fdfdfd" stroke="#5a5a5a"/><g transform="translate(45 534)"><path d="M-7 -5L-4 -7L0 -3L-2 0Z" fill="#305020"/><path d="M-5 -4L-2 -6" fill="none" stroke="#60a040" stroke-width="1.2"/><circle cx="2.5" cy="2.5" r="4.5" fill="url(#gY)" stroke="#d0b040" stroke-width="0.6"/><path d="M-2 -2L1 -1L-1 1Z" fill="#f0e8a0"/></g><g transform="translate(45 557)"><circle cx="0" cy="-4.5" r="3" fill="#8a98a8" stroke="#788898" stroke-width="0.8"/><path d="M-4 0H4L8 6.5H-8Z" fill="#909aa4" stroke="#808890" stroke-width="0.8"/></g><g transform="translate(45 579.5)"><path d="M-4.5 -6H4.5L8 6.5H-8Z" fill="#969696" stroke="#868686" stroke-width="0.8"/><path d="M-6 0H6M-7 3.5H7M-2 -6L-2.8 6.5M2 -6L2.8 6.5" fill="none" stroke="#7e7e7e" stroke-width="0.6"/></g><g transform="translate(39.5 603)"><path d="M-4.5 -6.5H4.5L8 6.5H-8Z" fill="#989090" stroke="#888080" stroke-width="0.8"/><circle cx="0" cy="0.5" r="2.6" fill="none" stroke="#786c6c" stroke-width="1"/><circle cx="0" cy="0.5" r="0.8" fill="#786c6c"/></g><path d="M53.5 602.0h6l-3 3.5z" fill="#000"/><g transform="translate(39.5 626.7)"><circle cx="-5" cy="-5" r="1.9" fill="#a09898"/><circle cx="0" cy="-5" r="1.9" fill="#a09898"/><circle cx="5" cy="-5" r="1.9" fill="#a09898"/><circle cx="-5" cy="5" r="1.9" fill="#a09898"/><circle cx="0" cy="5" r="1.9" fill="#a09898"/><circle cx="5" cy="5" r="1.9" fill="#a09898"/><circle cx="0" cy="0" r="1.9" fill="#a09898"/><path d="M0 -5V5" fill="none" stroke="#a09898" stroke-width="1.5"/></g><path d="M53.5 625.0h6l-3 3.5z" fill="#000"/><g transform="translate(39.5 648)"><circle cx="0" cy="0" r="6" fill="none" stroke="#a89c9c" stroke-width="2"/><path d="M-4 4L4 -4" fill="none" stroke="#a89c9c" stroke-width="2"/></g><path d="M53.5 647.0h6l-3 3.5z" fill="#000"/><g transform="translate(45 672.6)"><circle cx="-2" cy="-2" r="5" fill="url(#gS)"/><path d="M-6 5L-1 0Q-2 -4 2 -5L2 -2L5 -2L6 -4.5Q8 -1 4 1L2 1L-3 7Z" fill="url(#gY)" stroke="#c09000" stroke-width="0.7"/></g><path d="M36 686.0V693.0L32 689.5Z" fill="#000"/><rect x="65" y="154" width="25" height="430" fill="#e2e2e2"/><path d="M65.5 584V154.5H89" stroke="#f0f0f0" fill="none"/><path d="M65 583.5H88.5V154" stroke="#d2d2d2" fill="none"/><rect x="70" y="158" width="2" height="2" fill="#9c9c9c"/><rect x="71" y="159" width="1" height="1" fill="#fff"/><rect x="74" y="158" width="2" height="2" fill="#9c9c9c"/><rect x="75" y="159" width="1" height="1" fill="#fff"/><rect x="78" y="158" width="2" height="2" fill="#9c9c9c"/><rect x="79" y="159" width="1" height="1" fill="#fff"/><rect x="82" y="158" width="2" height="2" fill="#9c9c9c"/><rect x="83" y="159" width="1" height="1" fill="#fff"/><path d="M67 279.5H88" stroke="#bdbdbd"/><path d="M67 280.5H88" stroke="#f8f8f8"/><path d="M67 470.5H88" stroke="#bdbdbd"/><path d="M67 471.5H88" stroke="#f8f8f8"/><path d="M67 545.5H88" stroke="#bdbdbd"/><path d="M67 546.5H88" stroke="#f8f8f8"/><g transform="translate(77 171.5)"><path d="M-3 -7Q3 -8 5 -4L3 -3Q2 -6 -1 -5V5L-4 3Z" fill="url(#gLB)" stroke="#4070d0" stroke-width="0.7"/><path d="M-1 -5V5L2 3V-4Z" fill="#6090e0"/></g><g transform="translate(77 195.5)"><path d="M-7 -3L-1 -7L7 -2L1 1Z" fill="#fff" stroke="#7090d0" stroke-width="0.7"/><path d="M-4 -1L0 -3V5L-4 7Z" fill="url(#gY)" stroke="#c0a020" stroke-width="0.5"/><path d="M1 1L7 -2V3L1 6Z" fill="#d0d8f0" stroke="#8090c0" stroke-width="0.5"/><path d="M0 -3L4 -4L2 0" fill="#f08020"/></g><g transform="translate(77 219.5)"><path d="M-6 2Q-6 -2 -1 -2L2 -7L7 -5L4 2Q3 6 -2 6Q-6 6 -6 2Z" fill="url(#gY)" stroke="#c09000" stroke-width="0.7"/><path d="M2 -7L7 -5L5 0" fill="#e0a010"/></g><g transform="translate(77 242)"><path d="M-6 -5L-1 -7V6L-6 7ZM1 -7L6 -5V7L1 6Z" fill="url(#gB)" stroke="#102890" stroke-width="1.1"/><path d="M-1 -7L1 -7V2L0 4L-1 2Z" fill="#a8c0f0" stroke="#102890" stroke-width="0.8"/></g><g transform="translate(77 266.5)"><path d="M-2 -7L5 -8L4 2L7 3L-3 7L-6 5L-1 3Z" fill="url(#gLB)" stroke="#4068c8" stroke-width="0.8"/></g><g transform="translate(77 294)"><path d="M-6 0L-2 -6L7 -5L5 1L-1 2L-3 7Z" fill="url(#gB)" stroke="#3860c8" stroke-width="0.6"/><path d="M-6 0L-1 2L5 1" fill="none" stroke="#dce8ff" stroke-width="0.8"/><path d="M-3 -7L3 -7L2 -3L-3 -3Z" fill="#f8d030" stroke="#c09000" stroke-width="0.5"/></g><g transform="translate(77 317.5)"><path d="M-6 0L-2 -6L7 -5L5 1L-1 2L-3 7Z" fill="url(#gB)" stroke="#3860c8" stroke-width="0.6"/><path d="M-6 0L-1 2L5 1" fill="none" stroke="#dce8ff" stroke-width="0.8"/><ellipse cx="1" cy="-2" rx="3" ry="2.2" fill="#f08020" stroke="#c04000" stroke-width="0.5"/></g><g transform="translate(77 340)"><path d="M-6 0L-2 -6L7 -5L5 1L-1 2L-3 7Z" fill="url(#gB)" stroke="#3860c8" stroke-width="0.6"/><path d="M-6 0L-1 2L5 1" fill="none" stroke="#dce8ff" stroke-width="0.8"/><ellipse cx="1" cy="-2" rx="3" ry="2.2" fill="#fff" stroke="#e05020" stroke-width="0.9"/></g><g transform="translate(77 362.5)"><path d="M-6 0L-2 -6L7 -5L5 1L-1 2L-3 7Z" fill="url(#gB)" stroke="#3860c8" stroke-width="0.6"/><path d="M-6 0L-1 2L5 1" fill="none" stroke="#dce8ff" stroke-width="0.8"/><path d="M-2 -4Q2 -7 4 -2" fill="none" stroke="#dce8ff" stroke-width="1.5"/></g><g transform="translate(77 385)"><path d="M-6 0L-2 -6L7 -5L5 1L-1 2L-3 7Z" fill="url(#gB)" stroke="#3860c8" stroke-width="0.6"/><path d="M-6 0L-1 2L5 1" fill="none" stroke="#dce8ff" stroke-width="0.8"/><path d="M-1 -4Q2 -6 3 -2L2 0Q1 -2 -1 -1Z" fill="#fff" stroke="#3858c0" stroke-width="0.6"/></g><g transform="translate(77 408.7)"><path d="M-6 -3L0 -7L6 -3V3L0 7L-6 3Z" fill="url(#gB)" stroke="#2848b8" stroke-width="0.8"/><path d="M-4 -3H4V-1H1V5H-1V-1H-4Z" fill="#f06020" stroke="#c03000" stroke-width="0.4"/></g><g transform="translate(77 432)"><path d="M-7 -2Q-7 -6 0 -6Q7 -6 7 -2V3Q7 7 0 7Q-7 7 -7 3Z" fill="url(#gB)" stroke="#2848b8" stroke-width="0.7"/><path d="M-7 -2Q0 2 7 -2" fill="none" stroke="#dce8ff" stroke-width="0.9"/><path d="M-3 0V6M3 0V6" fill="none" stroke="#a8c0f0" stroke-width="0.7"/></g><g transform="translate(77 453.7)"><path d="M-7 -5L0 -7L7 -5L6 -2L2 -1V6L-2 7V-1L-6 -2Z" fill="url(#gY)" stroke="#3858c0" stroke-width="0.7"/><path d="M2 -1L6 -2L7 -5" fill="none" stroke="#3858c0" stroke-width="1"/><path d="M2 -1V6L5 4V-2Z" fill="#3060c8"/></g><g transform="translate(77 483)"><path d="M-6 -4L0 -7L6 -4V4L0 7L-6 4Z" fill="url(#gB)" stroke="#2848b8" stroke-width="0.8"/><path d="M-1 -3L2 -4V5L-1 6Z" fill="#f08020"/><path d="M-6 -4L0 -1L6 -4" fill="none" stroke="#dce8ff" stroke-width="0.8"/></g><g transform="translate(77 504.5)"><path d="M-6 -6L3 -3L0 5L-6 2Z" fill="url(#gLB)" stroke="#6080d0" stroke-width="0.7"/><path d="M-6 -6L-2 -7L5 -4L3 -3Z" fill="#f8e040"/><path d="M-4 -4L1 -2" fill="none" stroke="#f06020" stroke-width="1.3"/><path d="M2 4h6M5 1v6" fill="none" stroke="#e01020" stroke-width="1.6"/></g><g transform="translate(77 529)"><path d="M-6 -3Q0 -8 6 -4Q7 -1 2 0Q-3 1 -6 -3Z" fill="url(#gY)" stroke="#c09000" stroke-width="0.6"/><path d="M-7 2L1 0L7 2L5 7L-5 7Z" fill="url(#gB)" stroke="#3860c8" stroke-width="0.6"/><path d="M-7 2L0 4L7 2" fill="none" stroke="#dce8ff" stroke-width="0.8"/></g><g transform="translate(77 558.5)"><path d="M-7 -6L7 -6V-3H3Q3 2 1 6L-3 7Q0 2 -1 -3H-7Z" fill="url(#gY)" stroke="#c09000" stroke-width="0.7"/><path d="M-7 -6H7" fill="none" stroke="#3060c8" stroke-width="1.8"/><path d="M5 -3V4" fill="none" stroke="#3060c8" stroke-width="1.3"/></g><path d="M73 573.0V580.0L69 576.5Z" fill="#000"/><rect x="2" y="740" width="884" height="25" fill="#dbdbdb"/><path d="M2.5 765V740.5H886" stroke="#f4f4f4" fill="none"/><path d="M2 764.5H885.5V740" stroke="#c4c4c4" fill="none"/><rect x="888" y="740" width="176" height="25" fill="#dbdbdb"/><path d="M888.5 765V740.5H1064" stroke="#f4f4f4" fill="none"/><path d="M888 764.5H1063.5V740" stroke="#c4c4c4" fill="none"/><rect x="4" y="744" width="2" height="2" fill="#a4a4a4"/><rect x="5" y="745" width="1" height="1" fill="#fff"/><rect x="4" y="748" width="2" height="2" fill="#a4a4a4"/><rect x="5" y="749" width="1" height="1" fill="#fff"/><rect x="4" y="752" width="2" height="2" fill="#a4a4a4"/><rect x="5" y="753" width="1" height="1" fill="#fff"/><rect x="4" y="756" width="2" height="2" fill="#a4a4a4"/><rect x="5" y="757" width="1" height="1" fill="#fff"/><rect x="4" y="760" width="2" height="2" fill="#a4a4a4"/><rect x="5" y="761" width="1" height="1" fill="#fff"/><rect x="894" y="744" width="2" height="2" fill="#a4a4a4"/><rect x="895" y="745" width="1" height="1" fill="#fff"/><rect x="894" y="748" width="2" height="2" fill="#a4a4a4"/><rect x="895" y="749" width="1" height="1" fill="#fff"/><rect x="894" y="752" width="2" height="2" fill="#a4a4a4"/><rect x="895" y="753" width="1" height="1" fill="#fff"/><rect x="894" y="756" width="2" height="2" fill="#a4a4a4"/><rect x="895" y="757" width="1" height="1" fill="#fff"/><rect x="894" y="760" width="2" height="2" fill="#a4a4a4"/><rect x="895" y="761" width="1" height="1" fill="#fff"/><g transform="translate(19.5 753) scale(0.92)"><g transform="translate(2 2) scale(1.1)"><path d="M-5 -2.5L0 -5L5 -2.5L0 0Z" fill="#fffde0" stroke="#d0b020" stroke-width="0.5"/><path d="M-5 -2.5V2.5L0 5V0Z" fill="url(#gY)" stroke="#d0b020" stroke-width="0.5"/><path d="M0 0L5 -2.5V2.5L0 5Z" fill="#e8c020" stroke="#c0a010" stroke-width="0.5"/></g><path d="M-8 -6Q-5 -8 -3 -5L-1 -6L0 -3L-5 -2Z" fill="#202020"/></g><g transform="translate(41.5 753) scale(0.92)"><g transform="translate(-3 -3) scale(0.9)"><path d="M-5 -2.5L0 -5L5 -2.5L0 0Z" fill="#fffde0" stroke="#d0b020" stroke-width="0.5"/><path d="M-5 -2.5V2.5L0 5V0Z" fill="url(#gY)" stroke="#d0b020" stroke-width="0.5"/><path d="M0 0L5 -2.5V2.5L0 5Z" fill="#e8c020" stroke="#c0a010" stroke-width="0.5"/></g><g transform="translate(2 2.5) scale(1.1)"><path d="M-5 -2.5L0 -5L5 -2.5L0 0Z" fill="#fffde0" stroke="#d0b020" stroke-width="0.5"/><path d="M-5 -2.5V2.5L0 5V0Z" fill="url(#gY)" stroke="#d0b020" stroke-width="0.5"/><path d="M0 0L5 -2.5V2.5L0 5Z" fill="#e8c020" stroke="#c0a010" stroke-width="0.5"/></g></g><g transform="translate(65 753) scale(0.92)"><rect x="-8" y="-7.5" width="16" height="15" fill="#f0d860" stroke="#202020" stroke-width="1" rx="1.3"/><g transform="translate(-2 -1) scale(0.9)"><path d="M-5 -2.5L0 -5L5 -2.5L0 0Z" fill="#fffde0" stroke="#d0b020" stroke-width="0.5"/><path d="M-5 -2.5V2.5L0 5V0Z" fill="url(#gY)" stroke="#d0b020" stroke-width="0.5"/><path d="M0 0L5 -2.5V2.5L0 5Z" fill="#e8c020" stroke="#c0a010" stroke-width="0.5"/></g><g transform="translate(2.5 2.5) scale(0.9)"><path d="M-5 -2.5L0 -5L5 -2.5L0 0Z" fill="#fffde0" stroke="#d0b020" stroke-width="0.5"/><path d="M-5 -2.5V2.5L0 5V0Z" fill="url(#gY)" stroke="#d0b020" stroke-width="0.5"/><path d="M0 0L5 -2.5V2.5L0 5Z" fill="#e8c020" stroke="#c0a010" stroke-width="0.5"/></g></g><g transform="translate(88 753) scale(0.92)"><path d="M-7 -5L-3 -7L1 -5V2L-3 4L-7 2Z" fill="#f8f8ff" stroke="#98a0c0" stroke-width="0.7"/><g transform="translate(3 2.5) scale(1.1)"><path d="M-5 -2.5L0 -5L5 -2.5L0 0Z" fill="#fffde0" stroke="#d0b020" stroke-width="0.5"/><path d="M-5 -2.5V2.5L0 5V0Z" fill="url(#gY)" stroke="#d0b020" stroke-width="0.5"/><path d="M0 0L5 -2.5V2.5L0 5Z" fill="#e8c020" stroke="#c0a010" stroke-width="0.5"/></g></g><g transform="translate(111.5 753) scale(0.92)"><path d="M-7 -3L-2 -6L3 -3V4L-2 7L-7 4ZM-1 -4L4 -7L8 -4V2L4 5" fill="#e0ecff" stroke="#4058a8" stroke-width="1"/></g><g transform="translate(134.5 753) scale(0.92)"><path d="M-7 -4L-2 -7L3 -4V2L-2 5L-7 2Z" fill="#60a0c0" stroke="#305080" stroke-width="0.7"/><rect x="-1" y="-1" width="9" height="9" fill="#182888" stroke="#101860" stroke-width="1" rx="0.6"/><rect x="1" y="-1" width="5" height="4" fill="#fff"/><rect x="2" y="5" width="3" height="3" fill="#8090d0"/><circle cx="-6" cy="-6" r="1.5" fill="#101010"/></g><g transform="translate(157 753) scale(0.92)"><path d="M-7 -4L-2 -7L4 -4L7 0V5L2 8L-3 5L-7 2Z" fill="#a8a8a8" stroke="#909090" stroke-width="0.7"/></g><path d="M171.5 743V763" stroke="#bdbdbd"/><path d="M172.5 743V763" stroke="#f6f6f6"/><g transform="translate(185.5 753) scale(0.92)"><g transform="translate(-2 -3) scale(0.9)"><path d="M-5 -2.5L0 -5L5 -2.5L0 0Z" fill="#fffde0" stroke="#d0b020" stroke-width="0.5"/><path d="M-5 -2.5V2.5L0 5V0Z" fill="url(#gY)" stroke="#d0b020" stroke-width="0.5"/><path d="M0 0L5 -2.5V2.5L0 5Z" fill="#e8c020" stroke="#c0a010" stroke-width="0.5"/></g><g transform="translate(-2 3) scale(1.0)"><path d="M-5 -2.5L0 -5L5 -2.5L0 0Z" fill="#fffde0" stroke="#d0b020" stroke-width="0.5"/><path d="M-5 -2.5V2.5L0 5V0Z" fill="url(#gY)" stroke="#d0b020" stroke-width="0.5"/><path d="M0 0L5 -2.5V2.5L0 5Z" fill="#e8c020" stroke="#c0a010" stroke-width="0.5"/></g><path d="M3 -5h6M6 -8v6" fill="none" stroke="#2050e0" stroke-width="1.5"/></g><g transform="translate(209 753) scale(0.92)"><g transform="translate(-2 -3) scale(0.9)"><path d="M-5 -2.5L0 -5L5 -2.5L0 0Z" fill="#fffde0" stroke="#d0b020" stroke-width="0.5"/><path d="M-5 -2.5V2.5L0 5V0Z" fill="url(#gY)" stroke="#d0b020" stroke-width="0.5"/><path d="M0 0L5 -2.5V2.5L0 5Z" fill="#e8c020" stroke="#c0a010" stroke-width="0.5"/></g><g transform="translate(-2 3) scale(1.0)"><path d="M-5 -2.5L0 -5L5 -2.5L0 0Z" fill="#fffde0" stroke="#d0b020" stroke-width="0.5"/><path d="M-5 -2.5V2.5L0 5V0Z" fill="url(#gY)" stroke="#d0b020" stroke-width="0.5"/><path d="M0 0L5 -2.5V2.5L0 5Z" fill="#e8c020" stroke="#c0a010" stroke-width="0.5"/></g><path d="M3 -5h6M6 -8v6" fill="none" stroke="#2050e0" stroke-width="1.5"/><path d="M-8 -6L-5 -8" fill="none" stroke="#a0a0a0" stroke-width="0.8"/></g><g transform="translate(231.5 753) scale(0.92)"><g transform="translate(-3 -3) scale(0.8)"><path d="M-5 -2.5L0 -5L5 -2.5L0 0Z" fill="#fffde0" stroke="#d0b020" stroke-width="0.5"/><path d="M-5 -2.5V2.5L0 5V0Z" fill="url(#gY)" stroke="#d0b020" stroke-width="0.5"/><path d="M0 0L5 -2.5V2.5L0 5Z" fill="#e8c020" stroke="#c0a010" stroke-width="0.5"/></g><path d="M2 -3V8M6 -3V8M2 0h4M2 3h4M2 6h4" fill="none" stroke="#e0c020" stroke-width="1.2"/></g><g transform="translate(255.5 753) scale(0.92)"><path d="M-8 1L0 -2L7 1V4L-1 7L-8 4Z" fill="url(#gY)" stroke="#c0a010" stroke-width="0.6"/><path d="M3 -6h6M6 -9v6" fill="none" stroke="#2050e0" stroke-width="1.5"/></g><g transform="translate(278.5 753) scale(0.92)"><g transform="translate(-2 -2) scale(1.1)"><path d="M-5 -2.5L0 -5L5 -2.5L0 0Z" fill="#fffde0" stroke="#d0b020" stroke-width="0.5"/><path d="M-5 -2.5V2.5L0 5V0Z" fill="url(#gY)" stroke="#d0b020" stroke-width="0.5"/><path d="M0 0L5 -2.5V2.5L0 5Z" fill="#e8c020" stroke="#c0a010" stroke-width="0.5"/></g><path d="M0 0L8 8M8 0L0 8" fill="none" stroke="#101010" stroke-width="1.5"/></g><g transform="translate(301.5 753) scale(0.92)"><path d="M-6 2L2 -2L6 0L-2 4Z" fill="#fffde0" stroke="#d0b020" stroke-width="0.5"/><path d="M-6 2V5L-2 7V4ZM-2 4L6 0V3L-2 7Z" fill="url(#gY)" stroke="#d0b020" stroke-width="0.5"/><path d="M4 -4L8 -8M8 -8h-3.5M8 -8v3.5M-5 5L-8 8M-8 8h3.5M-8 8v-3.5" fill="none" stroke="#2040d0" stroke-width="1.3"/></g><g transform="translate(323.5 753) scale(0.92)"><path d="M-7 -7L-1 0L-7 7Z" fill="#2030c0"/><path d="M7 -7L1 0L7 7Z" fill="#e02020"/><path d="M0 -8V8" fill="none" stroke="#101010" stroke-width="1"/><path d="M-7 3H-2V7H-7Z" fill="#f0d020"/></g><g transform="translate(347 753) scale(0.92)"><path d="M-7 -5L-2 0L-7 5Z" fill="#20a030"/><path d="M-4 2l4 4" fill="none" stroke="#e02020" stroke-width="1.5"/><path d="M1 -2H8M4.5 -8V-2" fill="none" stroke="#202080" stroke-width="1.2"/><path d="M1 4L6 0M3 7L8 3" fill="none" stroke="#c02060" stroke-width="1.2"/></g><g transform="translate(370 753) scale(0.92)"><path d="M-7 7V1L-5 -1L-3 1L-1 -1L1 1V7Z" fill="#e02020" stroke="#901010" stroke-width="0.5"/><path d="M-7 4H1V7H-7Z" fill="#f0c020"/><rect x="2" y="-8" width="6.5" height="6.5" fill="#203090"/><rect x="3.5" y="-8" width="3.5" height="2.5" fill="#fff"/></g><g transform="translate(393 753) scale(0.92)"><path d="M-2 -7L5 -5V6L-2 8Z" fill="#fff" stroke="#303030" stroke-width="1"/><path d="M-2 -7L-4 -6V7L-2 8" fill="#d0d0d0" stroke="#303030" stroke-width="0.8"/><rect x="0" y="-2" width="4" height="5" fill="#f08020"/><path d="M-8 0h5M-5.5 -2.5v5" fill="none" stroke="#404040" stroke-width="1"/></g><g transform="translate(416 753) scale(0.92)"><g transform="translate(-2 -3) scale(1.0)"><path d="M-5 -2.5L0 -5L5 -2.5L0 0Z" fill="#fffde0" stroke="#d0b020" stroke-width="0.5"/><path d="M-5 -2.5V2.5L0 5V0Z" fill="url(#gY)" stroke="#d0b020" stroke-width="0.5"/><path d="M0 0L5 -2.5V2.5L0 5Z" fill="#e8c020" stroke="#c0a010" stroke-width="0.5"/></g><path d="M0 2L4 0L8 2V6L4 8L0 6Z" fill="url(#gLB)" stroke="#7090d0" stroke-width="0.6"/><path d="M-5 3L-1 6" fill="none" stroke="#f08020" stroke-width="1.4"/></g><g transform="translate(438 753) scale(0.92)"><path d="M-7 -5L-3 -7L1 -5V-1L-3 1L-7 -1Z" fill="url(#gLB)" stroke="#7090d0" stroke-width="0.6"/><g transform="translate(3 3) scale(1.0)"><path d="M-5 -2.5L0 -5L5 -2.5L0 0Z" fill="#fffde0" stroke="#d0b020" stroke-width="0.5"/><path d="M-5 -2.5V2.5L0 5V0Z" fill="url(#gY)" stroke="#d0b020" stroke-width="0.5"/><path d="M0 0L5 -2.5V2.5L0 5Z" fill="#e8c020" stroke="#c0a010" stroke-width="0.5"/></g><path d="M-4 2L-1 5" fill="none" stroke="#e04020" stroke-width="1.4"/></g><g transform="translate(462.5 753) scale(0.92)"><path d="M-7 6L-1 0Q-2 -3 1 -4L3 -1L1 1L-5 7.5Z" fill="url(#gY)" stroke="#c09000" stroke-width="0.7"/><path d="M1 -4L5 -7L8 -4V0L4 2L1 0Z" fill="url(#gLB)" stroke="#7090d0" stroke-width="0.7"/></g><g transform="translate(485 753) scale(0.92)"><path d="M-7 6L-1 0Q-2 -3 1 -4L3 -1L1 1L-5 7.5Z" fill="url(#gY)" stroke="#c09000" stroke-width="0.7"/><path d="M1 -4L5 -7L8 -4V0L4 2L1 0Z" fill="url(#gY)" stroke="#c0a010" stroke-width="0.7"/></g><rect x="500.5" y="745.5" width="119" height="18" fill="#cdcdcd" stroke="#efefef" stroke-width="1.2" rx="3"/><rect x="602" y="746" width="17" height="17" fill="#e8e8e8" rx="2"/><path d="M606 752h9l-4.5 5.5z" fill="#a0a0a0"/><g transform="translate(634.5 753) scale(0.92)"><rect x="-6" y="-6" width="12" height="12" fill="#f8e060" stroke="#d02020" stroke-width="1" rx="1.3"/><path d="M-8 0H8M0 -8V8" fill="none" stroke="#d02020" stroke-width="1"/><rect x="-7.5" y="-7.5" width="3" height="3" fill="#d02020"/><rect x="4.5" y="-7.5" width="3" height="3" fill="#d02020"/><rect x="-7.5" y="4.5" width="3" height="3" fill="#d02020"/><rect x="4.5" y="4.5" width="3" height="3" fill="#d02020"/></g><path d="M650.5 743V763" stroke="#bdbdbd"/><path d="M651.5 743V763" stroke="#f6f6f6"/><g transform="translate(664 753) scale(0.92)"><g transform="translate(-3 -4) scale(0.8)"><path d="M-5 -2.5L0 -5L5 -2.5L0 0Z" fill="#fffde0" stroke="#d0b020" stroke-width="0.5"/><path d="M-5 -2.5V2.5L0 5V0Z" fill="url(#gY)" stroke="#d0b020" stroke-width="0.5"/><path d="M0 0L5 -2.5V2.5L0 5Z" fill="#e8c020" stroke="#c0a010" stroke-width="0.5"/></g><g transform="translate(-4 3) scale(0.9)"><path d="M-5 -2.5L0 -5L5 -2.5L0 0Z" fill="#fffde0" stroke="#d0b020" stroke-width="0.5"/><path d="M-5 -2.5V2.5L0 5V0Z" fill="url(#gY)" stroke="#d0b020" stroke-width="0.5"/><path d="M0 0L5 -2.5V2.5L0 5Z" fill="#e8c020" stroke="#c0a010" stroke-width="0.5"/></g><g transform="translate(4 3) scale(0.9)"><path d="M-5 -2.5L0 -5L5 -2.5L0 0Z" fill="#fffde0" stroke="#d0b020" stroke-width="0.5"/><path d="M-5 -2.5V2.5L0 5V0Z" fill="url(#gY)" stroke="#d0b020" stroke-width="0.5"/><path d="M0 0L5 -2.5V2.5L0 5Z" fill="#e8c020" stroke="#c0a010" stroke-width="0.5"/></g></g><g transform="translate(687.5 753) scale(0.92)"><rect x="1.5" y="-7" width="4.5" height="4.5" fill="#fff" stroke="#000" stroke-width="1" rx="1.2"/><rect x="-3" y="-2.5" width="4.5" height="4.5" fill="#fff" stroke="#000" stroke-width="1" rx="1.2"/><rect x="-7" y="2.5" width="4.5" height="4.5" fill="#fff" stroke="#e02020" stroke-width="1" rx="1.3"/></g><path d="M701.5 743V763" stroke="#bdbdbd"/><path d="M702.5 743V763" stroke="#f6f6f6"/><g transform="translate(716 753) scale(0.92)"><path d="M-7 -3L-2 -6L3 -3V3L-2 6L-7 3Z" fill="#f4f6ff" stroke="#a0a8c8" stroke-width="0.7"/><g transform="translate(2 -1) scale(1.0)"><path d="M-5 -2.5L0 -5L5 -2.5L0 0Z" fill="#fffde0" stroke="#d0b020" stroke-width="0.5"/><path d="M-5 -2.5V2.5L0 5V0Z" fill="url(#gY)" stroke="#d0b020" stroke-width="0.5"/><path d="M0 0L5 -2.5V2.5L0 5Z" fill="#e8c020" stroke="#c0a010" stroke-width="0.5"/></g></g><g transform="translate(739 753) scale(0.92)"><rect x="-8" y="-6" width="13" height="11" fill="#c8d8f8" stroke="#4060c0" stroke-width="1" rx="1"/><rect x="-5" y="-4" width="13" height="11" fill="#e8f0ff" stroke="#4060c0" stroke-width="1" rx="1"/><rect x="-5" y="-4" width="13" height="2.5" fill="#4878e0"/><g transform="translate(2 3) scale(0.8)"><path d="M-5 -2.5L0 -5L5 -2.5L0 0Z" fill="#fffde0" stroke="#d0b020" stroke-width="0.5"/><path d="M-5 -2.5V2.5L0 5V0Z" fill="url(#gY)" stroke="#d0b020" stroke-width="0.5"/><path d="M0 0L5 -2.5V2.5L0 5Z" fill="#e8c020" stroke="#c0a010" stroke-width="0.5"/></g></g><g transform="translate(762 753) scale(0.92)"><ellipse cx="-1.5" cy="-2.5" rx="3" ry="4.5" fill="none" stroke="#c09010" stroke-width="2"/><ellipse cx="1.5" cy="2.5" rx="3" ry="4.5" fill="none" stroke="#d0a010" stroke-width="2"/></g><g transform="translate(786 753) scale(0.92)"><path d="M-8 0L-4 -7H4L8 0L4 7H-4Z" fill="url(#gY)" stroke="#c09000" stroke-width="0.8"/><path d="M-4 0L0 -4L4 0L0 4Z" fill="#2040c0"/><path d="M-1 0L1 -1.5V1.5Z" fill="#fff"/></g><g transform="translate(808 753) scale(0.92)"><ellipse cx="-3.5" cy="-3" rx="2.5" ry="4" fill="none" stroke="#b09030" stroke-width="1.8"/><ellipse cx="-1" cy="1.5" rx="2.5" ry="4" fill="none" stroke="#b09030" stroke-width="1.8"/><rect x="1" y="0" width="7" height="8" fill="#2030b0"/><text x="3" y="7" font-family="Liberation Serif,serif" font-weight="bold" font-size="8" fill="#fff">i</text></g><g transform="translate(831 753) scale(0.92)"><path d="M-8 -1H-2M-2 -5V3M-2 -5H5M-2 -1H5M-2 3H1" fill="none" stroke="#101010" stroke-width="1.3"/><rect x="2" y="-8" width="6" height="5" fill="#fff" stroke="#101010" stroke-width="1" rx="0.9"/><rect x="2" y="1" width="6.5" height="7" fill="#2030b0"/><rect x="3.5" y="4" width="3.5" height="3" fill="#fff"/></g><path d="M845.5 743V763" stroke="#bdbdbd"/><path d="M846.5 743V763" stroke="#f6f6f6"/><g transform="translate(861 753) scale(0.92)"><path d="M-7 -5H-1V0H-7Z" fill="#f8e060" stroke="#d02020" stroke-width="0.9"/><path d="M-4 -8V-5M-7 -3H-9" fill="none" stroke="#d02020" stroke-width="0.9"/><path d="M-2 -3H2V2H-2Z" fill="#f8d040" stroke="#c09000" stroke-width="0.6"/><path d="M1 2H6V-2L9 3L3.5 8L-1 3H1Z" fill="#30b040" stroke="#208030" stroke-width="0.5"/></g><path d="M874 760.0h6l-3 3.5z" fill="#000"/><rect x="901.5" y="745.5" width="46" height="18" fill="#fff" stroke="#6a7a9a" stroke-width="1.2" rx="3"/><rect x="930" y="746" width="17" height="17" fill="url(#gBv2)" stroke="#3a62b0" stroke-width="0.8" rx="2"/><path d="M933 752h11l-5.5 6z" fill="#101830"/><text x="902" y="759" font-family="Liberation Mono,monospace" font-size="12" fill="#000">1</text><g transform="translate(964 753) scale(0.92)"><path d="M-7 4L0 1L7 4L0 7Z" fill="#e4ece8" stroke="#84a098" stroke-width="0.7"/><path d="M-7 1L0 -2L7 1L0 4Z" fill="#e4ece8" stroke="#84a098" stroke-width="0.7"/><path d="M-7 -2L0 -5L7 -2L0 1Z" fill="#e4ece8" stroke="#84a098" stroke-width="0.7"/><rect x="0" y="-2" width="7" height="8" fill="#f4f6f6" stroke="#a8b4b4" stroke-width="1" rx="0.7"/></g><g transform="translate(987 753) scale(0.92)"><path d="M-7 4L0 1L7 4L0 7Z" fill="#e4ece4" stroke="#84a090" stroke-width="0.7"/><path d="M-7 1L0 -2L7 1L0 4Z" fill="#e4ece4" stroke="#84a090" stroke-width="0.7"/><path d="M-7 -2L0 -5L7 -2L0 1Z" fill="#e4ece4" stroke="#84a090" stroke-width="0.7"/><path d="M-3 0L3 2M3 -1L-3 3" fill="none" stroke="#e0a040" stroke-width="1.2"/></g><g transform="translate(1009.5 753) scale(0.92)"><path d="M-7 4L0 1L7 4L0 7Z" fill="#e4e8ec" stroke="#8498a0" stroke-width="0.7"/><path d="M-7 1L0 -2L7 1L0 4Z" fill="#e4e8ec" stroke="#8498a0" stroke-width="0.7"/><path d="M-7 -2L0 -5L7 -2L0 1Z" fill="#e4e8ec" stroke="#8498a0" stroke-width="0.7"/><circle cx="-1" cy="1" r="3" fill="#d0e0f0" stroke="#90a0c0" stroke-width="0.7"/></g><path d="M1024.5 743V763" stroke="#bdbdbd"/><path d="M1025.5 743V763" stroke="#f6f6f6"/><rect x="1028.5" y="743.5" width="22" height="21" rx="3" fill="#fdfdfd" stroke="#5a5a5a"/><g transform="translate(1039.5 754) scale(0.92)"><path d="M-6 -4V5.5L4 8M-6 5.5L3 0" fill="none" stroke="#e02020" stroke-width="1"/><path d="M-8 -2.5L-6 -6L-4 -2.5M2 8.8L5 8.2L3 6M1 -0.5L4 -0.5L3.2 2" fill="none" stroke="#e02020" stroke-width="1"/><path d="M2 -3L6 -8L8.5 -6L4.5 -1Z" fill="#2858d0" stroke="#1838a0" stroke-width="0.5"/><path d="M2 -3L1 0L4.5 -1Z" fill="#80a0e0"/></g><path d="M1053.5 760.0h6l-3 3.5z" fill="#000"/><rect x="1244" y="155" width="2" height="583" fill="#fafafa"/><rect x="1246" y="155" width="6" height="583" fill="#e4e4e4"/><rect x="1252" y="155" width="28" height="1" fill="#f4f4f4"/><path d="M1252.5 171.5H1269Q1273.5 171.5 1273.5 175.5V200.5Q1273.5 204.5 1269 204.5H1252.5Z" fill="#dcdcde" stroke="#8c8c90"/><path d="M1253 172.5H1269Q1272.5 172.5 1272.5 175.5" fill="none" stroke="#f6f6f6"/><path d="M1252.5 205.5H1269Q1273.5 205.5 1273.5 209.5V234.5Q1273.5 238.5 1269 238.5H1252.5Z" fill="#dcdcde" stroke="#8c8c90"/><path d="M1253 206.5H1269Q1272.5 206.5 1272.5 209.5" fill="none" stroke="#f6f6f6"/><path d="M1252.5 252.5H1269Q1273.5 252.5 1273.5 256.5V280.5Q1273.5 284.5 1269 284.5H1252.5Z" fill="#dcdcde" stroke="#8c8c90"/><path d="M1253 253.5H1269Q1272.5 253.5 1272.5 256.5" fill="none" stroke="#f6f6f6"/><path d="M1252.5 298.5H1269Q1273.5 298.5 1273.5 302.5V326.5Q1273.5 330.5 1269 330.5H1252.5Z" fill="#dcdcde" stroke="#8c8c90"/><path d="M1253 299.5H1269Q1272.5 299.5 1272.5 302.5" fill="none" stroke="#f6f6f6"/><path d="M1252.5 332.5H1269Q1273.5 332.5 1273.5 336.5V360.5Q1273.5 364.5 1269 364.5H1252.5Z" fill="#dcdcde" stroke="#8c8c90"/><path d="M1253 333.5H1269Q1272.5 333.5 1272.5 336.5" fill="none" stroke="#f6f6f6"/><path d="M1252.5 366.5H1269Q1273.5 366.5 1273.5 370.5V394.5Q1273.5 398.5 1269 398.5H1252.5Z" fill="#dcdcde" stroke="#8c8c90"/><path d="M1253 367.5H1269Q1272.5 367.5 1272.5 370.5" fill="none" stroke="#f6f6f6"/><path d="M1252.5 400.5H1269Q1273.5 400.5 1273.5 404.5V427.5Q1273.5 431.5 1269 431.5H1252.5Z" fill="#dcdcde" stroke="#8c8c90"/><path d="M1253 401.5H1269Q1272.5 401.5 1272.5 404.5" fill="none" stroke="#f6f6f6"/><path d="M1252.5 433.5H1269Q1273.5 433.5 1273.5 437.5V461.5Q1273.5 465.5 1269 465.5H1252.5Z" fill="#dcdcde" stroke="#8c8c90"/><path d="M1253 434.5H1269Q1272.5 434.5 1272.5 437.5" fill="none" stroke="#f6f6f6"/><path d="M1252.5 467.5H1269Q1273.5 467.5 1273.5 471.5V495.5Q1273.5 499.5 1269 499.5H1252.5Z" fill="#dcdcde" stroke="#8c8c90"/><path d="M1253 468.5H1269Q1272.5 468.5 1272.5 471.5" fill="none" stroke="#f6f6f6"/><g transform="translate(1263 187)"><rect x="-6" y="-7" width="4" height="4" fill="#f0f020" stroke="#a0a000" stroke-width="1" rx="0.7"/><rect x="-1" y="0" width="4" height="4" fill="#f0f020" stroke="#a0a000" stroke-width="1" rx="0.7"/><path d="M-4 -3V2H-1M-2 -3H6M3 2H7" fill="none" stroke="#505050" stroke-width="1"/></g><g transform="translate(1263 221)"><ellipse cx="-4" cy="-5" rx="2.2" ry="2.8" fill="#fff" stroke="#d02040" stroke-width="0.9"/><path d="M-4 -2V5H-1M-2 -2H6M-1 5H0" fill="none" stroke="#505050" stroke-width="1"/><rect x="0" y="3" width="6" height="3.5" fill="#d8dce8" stroke="#808890" stroke-width="1" rx="0.7"/></g><g transform="translate(1263 268)"><path d="M-6 -7H2L6 -3V7H-6Z" fill="#f8f0a0" stroke="#9090c0" stroke-width="0.8"/><circle cx="0" cy="1" r="3.8" fill="url(#gBS)"/><path d="M-2 -1Q0 1 2 -1" fill="none" stroke="#30a040" stroke-width="1.2"/></g><g transform="translate(1263 314)"><circle cx="0" cy="0" r="7" fill="#fff" stroke="#506080" stroke-width="1.6"/><path d="M0 -5V0H4" fill="none" stroke="#101010" stroke-width="1.3"/></g><g transform="translate(1263 348)"><path d="M-6 -6L-1 -7V6L-6 7ZM-1 -7L5 -6V7L-1 6Z" fill="#f8f8f8" stroke="#9098a8" stroke-width="0.8"/><rect x="1" y="-3" width="2" height="1.5" fill="#e03030"/><rect x="1" y="0" width="2" height="1.5" fill="#30a040"/><rect x="1" y="3" width="2" height="1.5" fill="#3050d0"/></g><g transform="translate(1263 382)"><rect x="-6" y="-7.0" width="4" height="2.4" fill="#e02020"/><rect x="-6" y="-4.6" width="4" height="2.4" fill="#f0a020"/><rect x="-6" y="-2.2" width="4" height="2.4" fill="#f0f020"/><rect x="-6" y="0.1999999999999993" width="4" height="2.4" fill="#30c040"/><rect x="-6" y="2.5999999999999996" width="4" height="2.4" fill="#2080e0"/><rect x="-6" y="5.0" width="4" height="2.4" fill="#3030c0"/><path d="M0 -3L5 6" fill="none" stroke="#6060c0" stroke-width="2"/></g><g transform="translate(1263 416)"><path d="M-6 -4V5M-4 -4V5" fill="none" stroke="#3040a0" stroke-width="1.5"/><path d="M-3 1L6 -5M0 0L6 5" fill="none" stroke="#304080" stroke-width="1.8"/><circle cx="5" cy="-5" r="1.5" fill="#f0e020"/><circle cx="-2" cy="5" r="1.2" fill="#30a040"/></g><g transform="translate(1263 450)"><circle cx="-3" cy="-2" r="3" fill="#f0c090" stroke="#a06030" stroke-width="0.6"/><path d="M-8 7Q-8 1 -3 1Q2 1 2 7Z" fill="#9040b0"/><circle cx="3.5" cy="-4" r="2.8" fill="#f0c090" stroke="#a06030" stroke-width="0.6"/><path d="M-1 3Q-1 -1 3.5 -1Q8 -1 8 3Z" fill="#30a040"/></g><g transform="translate(1263 483)"><rect x="-7.5" y="-6" width="15" height="12" fill="#3868d0" stroke="#203880" stroke-width="1" rx="1"/><path d="M-7 5L-2 -1L2 3L4 1L7 5Z" fill="#c8d8f8"/><circle cx="3" cy="-2" r="1.8" fill="#f0f040"/></g><g transform="translate(11 12)"><circle cx="0" cy="1.5" r="5.5" fill="url(#gBS)"/><path d="M-5 -7L5 -7L1 -0.5L-1 -0.5Z" fill="#e02030"/><path d="M-2 -1L0 3L2 -1" fill="none" stroke="#e8f4ff" stroke-width="1.2"/><ellipse cx="0" cy="2.5" rx="9" ry="3.6" fill="none" stroke="#f0a828" stroke-width="1.7" transform="rotate(-32 0 2.5)"/><path d="M-8 8L-4 5" fill="none" stroke="#f8e040" stroke-width="1.5"/></g><g transform="translate(15 39)"><path d="M-7 -5L-1 -8L3 -4L9 0L3 7L-5 6Z" fill="#2246cc" stroke="#0c1c80" stroke-width="0.8"/><path d="M-5 -3L-1 -5L2 -2L-3 1Z" fill="#5a90f8"/><path d="M-2 3L5 0L3 5Z" fill="#4878e8"/><path d="M-5 6V9" fill="none" stroke="#101848" stroke-width="1.2"/><rect x="-7" y="7" width="2" height="2" fill="#101848"/></g><rect x="4" y="32" width="2" height="2" fill="#a4a4a4"/><rect x="5" y="33" width="1" height="1" fill="#fff"/><rect x="4" y="36" width="2" height="2" fill="#a4a4a4"/><rect x="5" y="37" width="1" height="1" fill="#fff"/><rect x="4" y="40" width="2" height="2" fill="#a4a4a4"/><rect x="5" y="41" width="1" height="1" fill="#fff"/><rect x="4" y="44" width="2" height="2" fill="#a4a4a4"/><rect x="5" y="45" width="1" height="1" fill="#fff"/><rect x="4" y="48" width="2" height="2" fill="#a4a4a4"/><rect x="5" y="49" width="1" height="1" fill="#fff"/><rect x="1211.5" y="2.5" width="19" height="19" rx="3" fill="#3c3e3c" stroke="#6c6c6c"/><rect x="1212.5" y="3.5" width="17" height="8" rx="2" fill="#5a5c5a"/><rect x="1215" y="15" width="9" height="3" fill="#fff"/><rect x="1234.5" y="2.5" width="19" height="19" rx="3" fill="#3c3e3c" stroke="#6c6c6c"/><rect x="1235.5" y="3.5" width="17" height="8" rx="2" fill="#5a5c5a"/><path d="M1240.5 8.5V6.5H1249.5V13.5H1247.5" fill="none" stroke="#fff" stroke-width="1.6"/><rect x="1238.5" y="9.5" width="8" height="7" fill="none" stroke="#fff" stroke-width="1" rx="1.6"/><rect x="1257.5" y="2.5" width="19" height="19" rx="3" fill="#d03818" stroke="#f0a090"/><rect x="1258.5" y="3.5" width="17" height="8" rx="2" fill="#f07850"/><path d="M1262 7L1272 17M1272 7L1262 17" fill="none" stroke="#fff" stroke-width="2.2"/><rect x="1220.5" y="30.5" width="17" height="17" rx="3.5" fill="#f6f6f6" stroke="#8a8a8a"/><rect x="1224" y="42" width="8" height="2.5" fill="#303030"/><rect x="1239.5" y="30.5" width="17" height="17" rx="3.5" fill="#f6f6f6" stroke="#8a8a8a"/><path d="M1245.5 37.5V35.5H1252.5V41.5H1250.5" fill="none" stroke="#404040" stroke-width="1.3"/><rect x="1243.5" y="38.5" width="7" height="6" fill="none" stroke="#404040" stroke-width="1" rx="1.3"/><rect x="1258.5" y="30.5" width="17" height="17" rx="3.5" fill="#f0f0f0" stroke="#d6d6d6"/><path d="M1263 35.5L1271 43.5M1271 35.5L1263 43.5" fill="none" stroke="#d0d0d0" stroke-width="2"/><path d="M600.5 134V152" stroke="#f8f8f8"/><path d="M599.5 134V152" stroke="#c8c8c8"/><path d="M1202.5 134V152" stroke="#f8f8f8"/><path d="M1201.5 134V152" stroke="#c8c8c8"/><path d="M1222.5 134V152" stroke="#f8f8f8"/><path d="M1221.5 134V152" stroke="#c8c8c8"/><g transform="translate(1269 144)"><rect x="-5" y="-4" width="10" height="8" fill="#dce8ff" stroke="#203880" stroke-width="1" rx="1.3"/><rect x="-3.5" y="-2.5" width="7" height="5" fill="#3870d8"/><path d="M-7 -4V-6.5H-4.5M7 -4V-6.5H4.5M-7 4V6.5H-4.5M7 4V6.5H4.5" fill="none" stroke="#404040" stroke-width="1.2"/></g><rect x="0" y="770" width="5" height="27" fill="#2a8a2a"/><rect x="0" y="797" width="5" height="3" fill="#2060d0"/><rect x="1" y="770" width="2" height="27" fill="#50b050"/><rect x="1209" y="765" width="71" height="5" fill="#dedede"/><rect x="1209" y="770" width="71" height="30" fill="#1686ec"/><rect x="1209" y="770" width="71" height="1" fill="#0a6ad8"/><rect x="1209" y="771" width="71" height="2" fill="#2c98f6"/><rect x="1209" y="796" width="71" height="4" fill="#1078e0"/><text x="1237.5" y="789" font-family="Liberation Sans,sans-serif" font-size="11.5" fill="#f0f8ff" letter-spacing="0.1">13:15</text><g transform="translate(1221 785)"><path d="M-6 -6Q-3 -4 -2 1L3 2L6 5L1 7L-3 4Q-5 0 -6 -6Z" fill="#f4f4f4" stroke="#303030" stroke-width="0.8"/><ellipse cx="3.5" cy="4.5" rx="2.5" ry="1.5" fill="#d8c020" stroke="#505000" stroke-width="0.5"/></g></svg>
<svg class="abs" style="left:93px;top:156px" width="1150" height="582" viewBox="93 156 1150 582">
<defs>
<linearGradient id="gEdge" gradientUnits="userSpaceOnUse" x1="778" y1="490" x2="700" y2="645"><stop offset="0" stop-color="#ffff00"/><stop offset="0.25" stop-color="#e6e600"/><stop offset="0.5" stop-color="#a8a800"/><stop offset="0.8" stop-color="#747400"/><stop offset="1" stop-color="#626200"/></linearGradient>
<linearGradient id="gIn" gradientUnits="userSpaceOnUse" x1="686" y1="322" x2="612" y2="440"><stop offset="0" stop-color="#4e4e00"/><stop offset="0.35" stop-color="#7e7e00"/><stop offset="0.65" stop-color="#b4b400"/><stop offset="0.85" stop-color="#e8e800"/><stop offset="1" stop-color="#ffff00"/></linearGradient>
<linearGradient id="gBg" gradientUnits="userSpaceOnUse" x1="0" y1="156" x2="0" y2="738"><stop offset="0" stop-color="#92badb"/><stop offset="0.72" stop-color="#e5e6e7"/><stop offset="1" stop-color="#e6e6e6"/></linearGradient>
<path id="pO" d="M715.2 224.6C718.2 225.0 721.2 225.6 724.0 226.6C726.9 227.6 729.7 229.0 732.4 230.6C735.1 232.3 737.7 234.3 740.2 236.6C742.6 238.9 745.0 241.6 747.2 244.5C749.4 247.5 751.5 250.8 753.4 254.4C755.4 257.9 757.2 261.8 758.8 265.9C760.4 270.0 761.9 274.4 763.3 278.9C764.6 283.4 765.8 288.2 766.9 293.1C768.0 298.0 768.9 303.2 769.7 308.4C770.5 313.6 771.2 318.9 771.8 324.3C772.4 329.8 772.8 335.3 773.2 341.0C773.6 346.6 773.8 352.4 774.0 358.2C774.1 364.0 774.2 369.9 774.1 375.9C774.0 381.9 773.9 388.0 773.6 394.2C773.3 400.4 772.8 406.6 772.3 413.0C771.7 419.3 771.0 425.7 770.1 432.1C769.3 438.6 768.3 445.1 767.1 451.6C765.9 458.1 764.6 464.7 763.1 471.2C761.6 477.6 760.0 484.2 758.2 490.6C756.4 497.0 754.5 503.4 752.4 509.6C750.3 515.8 748.1 522.0 745.7 528.0C743.4 534.0 740.9 539.9 738.4 545.6C735.8 551.3 733.1 556.8 730.4 562.2C727.7 567.6 724.9 572.8 722.0 577.9C719.1 582.9 716.2 587.8 713.3 592.5C710.3 597.2 707.3 601.7 704.2 606.1C701.2 610.5 698.1 614.7 694.9 618.7C691.8 622.7 688.7 626.6 685.5 630.3C682.3 634.0 679.1 637.5 675.8 640.9C672.6 644.2 669.3 647.3 666.0 650.2C662.7 653.0 659.4 655.7 656.1 658.0C652.8 660.4 649.4 662.5 646.1 664.3C642.8 666.1 639.5 667.6 636.2 668.8C633.0 669.9 629.7 670.8 626.5 671.3C623.4 671.8 620.2 671.9 617.1 671.7C614.1 671.5 611.1 671.0 608.2 670.1C605.3 669.3 602.4 668.1 599.7 666.6C597.0 665.1 594.3 663.3 591.8 661.2C589.3 659.2 586.8 656.8 584.5 654.2C582.2 651.6 579.9 648.8 577.8 645.7C575.7 642.7 573.7 639.4 571.8 635.9C569.8 632.5 568.0 628.8 566.3 625.0C564.6 621.1 563.0 617.1 561.5 612.8C560.0 608.6 558.6 604.2 557.3 599.6C556.1 595.0 554.9 590.3 553.9 585.3C552.8 580.4 551.9 575.3 551.2 570.0C550.4 564.7 549.8 559.3 549.3 553.7C548.8 548.1 548.5 542.4 548.3 536.5C548.1 530.6 548.1 524.6 548.2 518.5C548.3 512.4 548.6 506.2 549.1 499.9C549.5 493.6 550.1 487.2 550.8 480.8C551.5 474.4 552.4 468.0 553.4 461.5C554.4 455.0 555.6 448.5 556.9 442.0C558.2 435.6 559.6 429.1 561.2 422.6C562.7 416.2 564.4 409.8 566.2 403.4C568.0 397.0 569.9 390.7 571.9 384.5C573.9 378.3 576.1 372.1 578.3 366.0C580.6 360.0 582.9 354.0 585.4 348.2C587.8 342.4 590.4 336.7 593.1 331.1C595.7 325.6 598.5 320.2 601.3 315.0C604.1 309.9 607.0 304.8 610.0 300.1C612.9 295.3 616.0 290.7 619.1 286.3C622.2 282.0 625.3 277.8 628.5 273.9C631.7 270.0 634.9 266.4 638.1 262.9C641.3 259.5 644.6 256.3 647.8 253.3C651.1 250.4 654.4 247.7 657.7 245.1C660.9 242.6 664.2 240.3 667.5 238.3C670.7 236.2 674.0 234.3 677.2 232.7C680.5 231.1 683.7 229.7 687.0 228.5C690.2 227.3 693.4 226.3 696.6 225.6C699.7 224.9 702.9 224.5 706.0 224.3C709.1 224.1 712.2 224.2 715.2 224.6Z"/>
<path id="pI" d="M687.0 322.9C689.1 322.9 691.1 323.2 693.1 323.9C695.0 324.6 696.9 325.6 698.7 326.9C700.4 328.2 702.1 330.0 703.7 332.0C705.2 334.0 706.7 336.3 708.0 338.9C709.3 341.6 710.5 344.5 711.5 347.6C712.5 350.7 713.4 354.1 714.2 357.6C715.0 361.1 715.6 364.8 716.2 368.5C716.7 372.3 717.1 376.2 717.5 380.1C717.8 384.1 718.1 388.1 718.3 392.1C718.5 396.2 718.6 400.3 718.6 404.5C718.6 408.6 718.6 412.8 718.5 417.1C718.4 421.4 718.2 425.7 718.0 430.1C717.7 434.5 717.4 439.0 716.9 443.5C716.4 448.0 715.9 452.6 715.2 457.2C714.5 461.8 713.7 466.5 712.8 471.1C711.8 475.7 710.8 480.4 709.6 484.9C708.3 489.4 707.0 493.9 705.5 498.3C704.0 502.6 702.4 506.9 700.7 510.9C699.0 514.9 697.2 518.8 695.3 522.4C693.4 526.0 691.5 529.4 689.4 532.6C687.4 535.8 685.4 538.7 683.3 541.4C681.2 544.0 679.1 546.5 676.9 548.7C674.8 550.9 672.7 552.9 670.6 554.8C668.4 556.6 666.3 558.2 664.2 559.6C662.1 561.0 660.0 562.3 657.9 563.4C655.8 564.5 653.7 565.4 651.7 566.1C649.6 566.8 647.5 567.3 645.5 567.7C643.5 568.0 641.4 568.1 639.5 568.0C637.5 567.8 635.5 567.5 633.6 566.8C631.7 566.2 629.9 565.3 628.1 564.1C626.4 562.8 624.7 561.4 623.1 559.6C621.5 557.8 620.0 555.8 618.6 553.4C617.2 551.1 615.9 548.5 614.7 545.7C613.6 542.9 612.5 539.8 611.6 536.6C610.7 533.4 609.9 529.9 609.2 526.3C608.5 522.7 607.9 519.0 607.4 515.1C607.0 511.3 606.6 507.3 606.3 503.2C606.1 499.1 605.9 494.9 605.9 490.7C605.8 486.4 605.8 482.1 606.0 477.7C606.1 473.3 606.4 468.8 606.7 464.3C607.1 459.8 607.6 455.2 608.2 450.6C608.8 446.1 609.5 441.4 610.3 436.8C611.1 432.2 612.1 427.6 613.2 423.0C614.3 418.5 615.5 414.0 616.8 409.6C618.1 405.2 619.6 400.9 621.1 396.7C622.7 392.6 624.3 388.5 626.1 384.7C627.8 380.9 629.6 377.2 631.4 373.7C633.3 370.2 635.2 366.9 637.2 363.8C639.1 360.7 641.1 357.8 643.1 355.1C645.1 352.4 647.2 349.8 649.2 347.4C651.3 345.0 653.3 342.8 655.4 340.7C657.5 338.6 659.6 336.6 661.7 334.8C663.8 333.1 665.9 331.4 668.0 330.0C670.1 328.6 672.3 327.3 674.4 326.2C676.5 325.2 678.7 324.3 680.8 323.8C682.9 323.2 685.0 322.9 687.0 322.9Z"/>
<clipPath id="cVis"><path d="M93 156H1243V738H671V655H93Z"/></clipPath>
<clipPath id="cHole"><use href="#pI"/></clipPath>
<mask id="mHole"><rect x="93" y="156" width="1150" height="582" fill="#fff"/><use href="#pI" fill="#000"/></mask>
</defs>
<g clip-path="url(#cVis)"><use href="#pO" transform="translate(11 2.5)" fill="url(#gEdge)" stroke="#1c1c00" stroke-width="1"/>
<g mask="url(#mHole)"><use href="#pO" fill="#b9b900" stroke="#1c1c00" stroke-width="1"/></g></g>
<g clip-path="url(#cHole)">
<use href="#pI" fill="url(#gIn)"/>
<use href="#pI" transform="translate(11 2)" fill="url(#gBg)" stroke="#1c1c00" stroke-width="1"/>
</g>
<use href="#pI" fill="none" stroke="#1c1c00" stroke-width="1"/>
<path d="M772.9 344.4 L783 347 M772.9 389.5 L783 392.2" stroke="#1c1c00" stroke-width="1" fill="none"/>
<!-- WCS -->
<path d="M663.5 444.5 V397" stroke="#e02020" stroke-width="1" fill="none"/>
<path d="M663 444.5 L692 424.5" stroke="#30c040" stroke-width="1" fill="none"/>
<path d="M663 444.5 L708 457.6" stroke="#2030d0" stroke-width="1" fill="none"/>
<text x="664" y="392" font-family="Liberation Sans, sans-serif" font-size="12.3" fill="#e02020">XC</text>
<text x="696" y="422" font-family="Liberation Sans, sans-serif" font-size="12.3" fill="#e02020">YC</text>
<text x="714" y="460" font-family="Liberation Sans, sans-serif" font-size="12.3" fill="#999">ZC</text>
<!-- view triad -->
<path d="M173.5 655 V617" stroke="#20b080" stroke-width="1.6" fill="none"/>
<path d="M173 655 L197 640" stroke="#3030c0" stroke-width="1.4" fill="none"/>
<path d="M173 655 L209 664" stroke="#e02020" stroke-width="1.4" fill="none"/>
<circle cx="173.5" cy="655" r="4.5" fill="#8c8c8c"/>
<text x="170" y="613" font-family="Liberation Sans, sans-serif" font-size="12" fill="#20b080">Y</text>
<text x="200" y="640" font-family="Liberation Sans, sans-serif" font-size="12" fill="#3030c0">Z</text>
<text x="217" y="673" font-family="Liberation Sans, sans-serif" font-size="12" fill="#e02020">X</text>
</svg>
<div id="note" class="abs"><div style="position:absolute;left:0;top:0;white-space:nowrap"><span style="font-size:16.6px">按鼠标右键点</span><span style="margin-left:2px;font-size:15.4px">orient view-custom</span></div><div style="position:absolute;left:0;top:19px;font-size:15.5px">views</div></div>
<!-- menu 1 -->
<div class="abs menu" style="left:367px;top:250px;width:150px;height:310px">
<div class="mi" style="top:2px"><span class="l" style="letter-spacing:-0.57px">Refre<u>s</u>h</span><span class="r" style="letter-spacing:-0.80px">F5</span></div>
<div class="mi" style="top:24px"><span class="l" style="letter-spacing:-0.26px"><u>F</u>it</span><span class="r" style="letter-spacing:-0.39px">Ctrl+F</span></div>
<div class="mi" style="top:46px"><span class="l" style="letter-spacing:-0.07px"><u>Z</u>oom</span><span class="r" style="letter-spacing:-0.80px">F6</span></div>
<div class="mi" style="top:68px"><span class="l" style="letter-spacing:0.03px">R<u>o</u>tate</span><span class="r" style="letter-spacing:-0.80px">F7</span></div>
<div class="mi" style="top:90px"><span class="l" style="letter-spacing:-0.80px"><u>P</u>an</span></div>
<div class="mi" style="top:112px"><span class="l" style="letter-spacing:0.09px">Update Displa<u>y</u></span></div>
<div class="mi" style="top:134px"><span class="l" style="letter-spacing:-0.24px">R<u>e</u>store</span></div>
<div class="mi" style="top:156px"><span class="l" style="letter-spacing:-0.24px">True Shad<u>i</u>ng</span></div>
<div class="msep" style="left:12px;top:182px;width:122px"></div>
<div class="mi" style="top:187px"><span class="l" style="letter-spacing:-0.12px">Ren<u>d</u>ering Style</span><i class="arr" style="left:136px;top:7px"></i></div>
<div class="mi hl" style="top:209px"><span class="l" style="letter-spacing:0.18px">O<u>r</u>ient View</span><i class="arr" style="left:136px;top:7px;border-left-color:#fff"></i></div>
<div class="mi" style="top:231px"><span class="l" style="letter-spacing:0.11px">Replace <u>V</u>iew</span><i class="arr" style="left:136px;top:7px"></i></div>
<div class="mi" style="top:253px"><span class="l" style="letter-spacing:0.04px"><u>S</u>et Rotate Point</span></div>
<div class="msep" style="left:12px;top:279px;width:122px"></div>
<div class="mi" style="top:284px"><span class="l" style="letter-spacing:-0.09px"><u>U</u>ndo</span></div>
</div>
<!-- submenu -->
<div class="abs menu" style="left:515px;top:461px;width:157px;height:212px">
<div class="mi" style="top:1px"><span class="l" style="letter-spacing:0.07px"><u>T</u>rimetric</span><span class="r" style="letter-spacing:-0.20px">Home</span></div>
<div class="mi" style="top:23px"><span class="l" style="letter-spacing:0.07px"><u>I</u>sometric</span><span class="r" style="letter-spacing:-0.80px">End</span></div>
<div class="mi" style="top:45px"><span class="l" style="letter-spacing:0.50px">T<u>o</u>p</span><span class="r" style="letter-spacing:0.05px">Ctrl+Alt+T</span></div>
<div class="mi" style="top:67px"><span class="l" style="letter-spacing:0.01px"><u>F</u>ront</span><span class="r" style="letter-spacing:0.05px">Ctrl+Alt+F</span></div>
<div class="mi" style="top:89px"><span class="l" style="letter-spacing:0.01px"><u>R</u>ight</span><span class="r" style="letter-spacing:0.06px">Ctrl+Alt+R</span></div>
<div class="mi" style="top:111px"><span class="l" style="letter-spacing:-0.29px"><u>B</u>ack</span></div>
<div class="mi" style="top:133px"><span class="l" style="letter-spacing:0.42px">Botto<u>m</u></span></div>
<div class="mi" style="top:155px"><span class="l" style="letter-spacing:-0.09px"><u>L</u>eft</span><span class="r" style="letter-spacing:0.02px">Ctrl+Alt+L</span></div>
<div class="msep" style="left:12px;top:181px;width:130px"></div>
<div class="mi hl" style="top:186px"><span class="l" style="letter-spacing:-0.04px"><u>C</u>ustom Views...</span></div>
</div>




<!--MI--><svg class="abs" style="left:367px;top:250px" width="310" height="430" viewBox="367 250 310 430"><g transform="translate(380 264) scale(0.9)"><rect x="-7.5" y="-6.5" width="15" height="13" fill="#d8e8ff" stroke="#3858c8" stroke-width="1" rx="1"/><rect x="-7.5" y="-6.5" width="15" height="3" fill="#3f78e8"/><path d="M-3.5 1A3.7 3.7 0 0 1 3 -1.5L4.5 -3V1.5H0L1.5 0A2 2 0 0 0 -1.7 1Z" fill="#20a030"/><path d="M3.5 2.5A3.7 3.7 0 0 1 -3 5L-4.5 6.5V2H0L-1.5 3.5A2 2 0 0 0 1.7 2.5Z" fill="#20a030"/></g><g transform="translate(380 286) scale(0.9)"><rect x="-7.5" y="-6.5" width="15" height="13" fill="#f4f8ff" stroke="#3858c8" stroke-width="1" rx="1"/><rect x="-7.5" y="-6.5" width="15" height="3" fill="#3f78e8"/><path d="M-4 -2L4 5M4 -2L-4 5" fill="none" stroke="#f07000" stroke-width="1.8"/><path d="M-5 -3h3l-3 3zM5 -3h-3l3 3zM-5 6h3l-3 -3zM5 6h-3l3 -3z" fill="#f09000"/></g><g transform="translate(380 308) scale(0.9)"><rect x="-7.5" y="-7" width="14" height="13" fill="#eef4ff" stroke="#3050c0" stroke-width="1" rx="1.2"/><circle cx="-0.5" cy="0" r="4" fill="#fff" stroke="#506080" stroke-width="1.2"/><path d="M2.5 3L7 7.5" fill="none" stroke="#404860" stroke-width="2"/><rect x="5" y="-8" width="3" height="3" fill="#d02020"/><rect x="-8.5" y="5" width="3" height="3" fill="#4040a0"/></g><g transform="translate(380 330) scale(0.9)"><path d="M-6 1A6 6 0 0 1 4.5 -4.5" fill="none" stroke="#182868" stroke-width="2.2"/><path d="M6 -1A6 6 0 0 1 -4.5 4.5" fill="none" stroke="#182868" stroke-width="2.2"/><path d="M2.5 -7.5L8 -4.5L3 -1Z" fill="#182868"/><path d="M-2.5 7.5L-8 4.5L-3 1Z" fill="#182868"/></g><g transform="translate(380 352) scale(0.9)"><rect x="-7.5" y="-7" width="15" height="12" fill="#fff" stroke="#4058a8" stroke-width="1" rx="1"/><rect x="-7.5" y="-7" width="15" height="2" fill="#a8b8e8"/><path d="M0 -1V5L2 7.5H7V0L5.5 -0.5V2.5V-2L4 -2V2V-2.5L2.5 -2.5V2L1.5 -1Z" fill="#ffc840" stroke="#c08000" stroke-width="0.6"/></g><g transform="translate(380 396) scale(0.9)"><rect x="-4" y="-7" width="12" height="10" fill="#e8f0ff" stroke="#3050b0" stroke-width="1" rx="1"/><rect x="-4" y="-7" width="12" height="2.5" fill="#3060d0"/><path d="M-8 3L-4 -1V1.5H2V4.5H-4V7Z" fill="#40a0a0" stroke="#207070" stroke-width="0.5"/></g><g transform="translate(380 418) scale(0.9)"><circle cx="0" cy="0" r="7" fill="url(#gS2)"/></g><g transform="translate(380 515) scale(0.9)"><path d="M-5 -4A6.5 6.5 0 1 1 -5 4" fill="none" stroke="#f06020" stroke-width="1.6"/><path d="M-8 -5L-3 -6L-4 -1Z" fill="#f06020"/><circle cx="0.5" cy="0" r="1.6" fill="#e02020"/><path d="M-3 0H4M0.5 -3.5V3.5" fill="none" stroke="#e0a020" stroke-width="0.8"/></g><g transform="translate(380 546) scale(0.9)"><path d="M-6.5 -1.5L-1 -6.5V-3.5Q6.5 -3.5 6.5 3Q6.5 5.5 4.5 6.5Q5 1 -1 0.5V3.5Z" fill="#101848"/></g><g transform="translate(528 474) scale(1.0)"><path d="M-8 3.5L0 1L8 4L1 7Z" fill="#c0c0c0" stroke="#727272" stroke-width="0.7"/><path d="M-6 2.5Q-6 -5 0 -6.5L3 -5.5V2.5L0 1Z" fill="#9c9c9c" stroke="#727272" stroke-width="0.6"/><path d="M0 -6.5V1" fill="none" stroke="#b8b8b8" stroke-width="0.7"/></g><g transform="translate(528 496) scale(1.0)"><path d="M-8 3L0 0.5L8 3.5L0 7Z" fill="#c0c0c0" stroke="#727272" stroke-width="0.7"/><path d="M-6 2Q-5 -5 1 -6.5L4 -5V2L0 0.5Z" fill="#9c9c9c" stroke="#727272" stroke-width="0.6"/><path d="M1 -6.5V1" fill="none" stroke="#b8b8b8" stroke-width="0.7"/></g><g transform="translate(528 518) scale(1.0)"><rect x="-7" y="-7" width="14" height="14" fill="#c0c0c0" stroke="#727272" stroke-width="1" rx="1"/><path d="M-4 -7V3Q-4 5 -2 5H7" fill="none" stroke="#727272" stroke-width="0.8"/></g><g transform="translate(528 540) scale(1.0)"><path d="M-7 -7H-4V4H7V7H-7Z" fill="#c0c0c0" stroke="#727272" stroke-width="1"/></g><g transform="translate(528 562) scale(1.0)"><path d="M-7 7V0L-2 -6H7V7Z" fill="#c0c0c0" stroke="#727272" stroke-width="1"/><path d="M-7 3H7" fill="none" stroke="#727272" stroke-width="0.8"/></g><g transform="translate(528 584) scale(1.0)"><path d="M7 -7H4V4H-7V7H7Z" fill="#c0c0c0" stroke="#727272" stroke-width="1"/></g><g transform="translate(528 606) scale(1.0)"><rect x="-7" y="-7" width="14" height="14" fill="#c0c0c0" stroke="#727272" stroke-width="1" rx="1.5"/><circle cx="4" cy="-4" r="1.5" fill="none" stroke="#727272" stroke-width="0.8"/></g><g transform="translate(528 628) scale(1.0)"><path d="M-7 -7H0Q7 -5 7 2V7H-7Z" fill="#c0c0c0" stroke="#727272" stroke-width="1"/></g><defs><radialGradient id="gS2" cx="0.35" cy="0.3" r="0.7"><stop offset="0" stop-color="#ffffff"/><stop offset="0.5" stop-color="#b8b8b8"/><stop offset="1" stop-color="#606060"/></radialGradient></defs></svg><!--/MI-->
<!-- red ellipse -->
<svg class="abs" style="left:495px;top:630px" width="185" height="65" viewBox="495 630 185 65"><ellipse cx="582.9" cy="667.2" rx="80.9" ry="19.5" fill="none" stroke="#e01020" stroke-width="1.1"/></svg>
<!-- tooltip -->
<svg class="abs" style="left:668px;top:660px" width="34" height="26" viewBox="668 660 34 26"><path d="M671.5 660.5 L702 678.5 L682 678.5 Z" fill="#ffffe1" stroke="#000" stroke-width="1"/></svg>
<div id="tip" class="abs"><div style="top:7px">Orients the view where the cursor is positioned to</div><div style="top:19px">align with a user defined view.</div></div>
<div class="abs" style="left:683px;top:678px;width:18px;height:1px;background:#ffffe1"></div>


</body></html>
